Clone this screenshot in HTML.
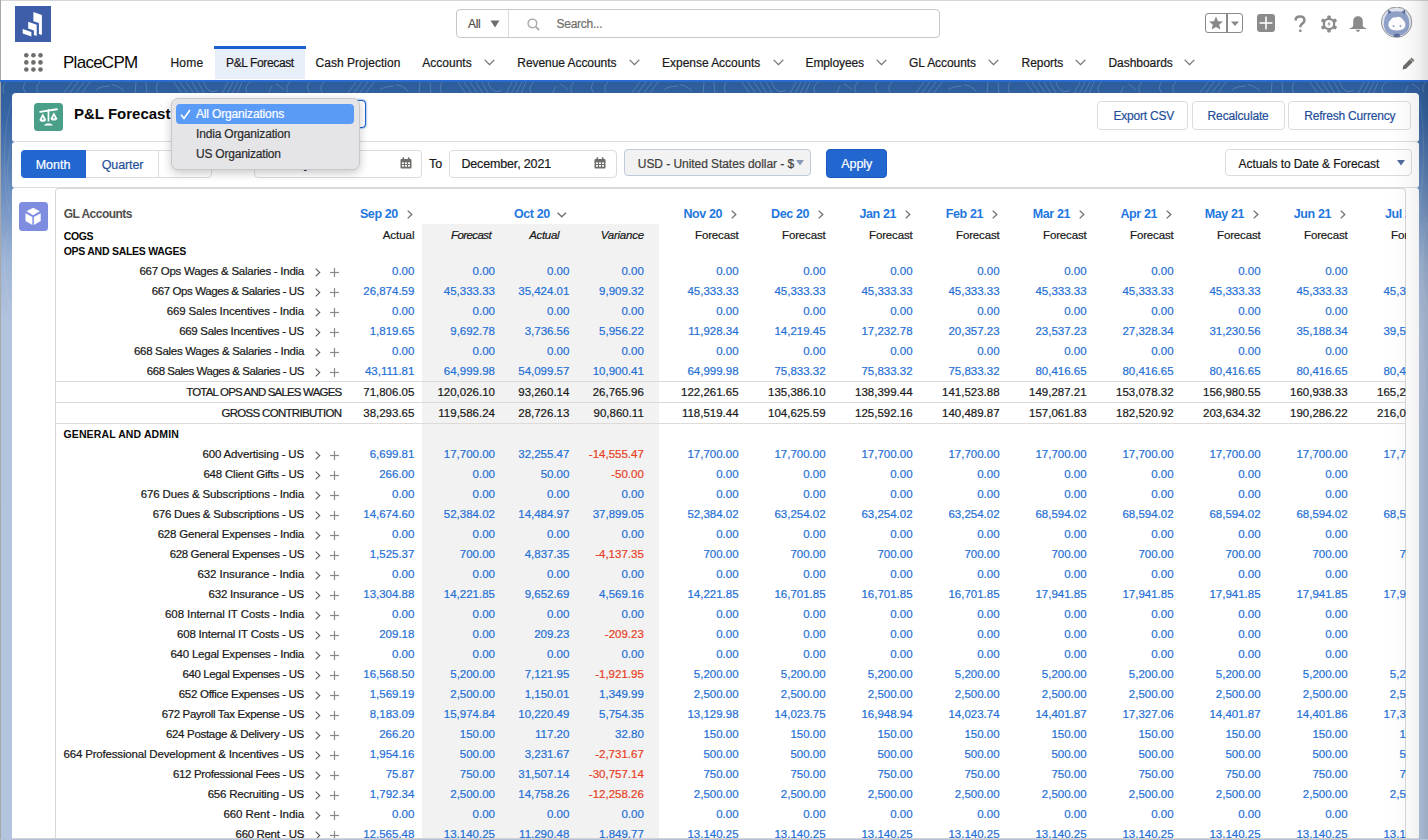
<!DOCTYPE html>
<html><head><meta charset="utf-8"><title>P&amp;L Forecast</title>
<style>
html,body{margin:0;padding:0;}
body{width:1428px;height:840px;position:relative;overflow:hidden;background:#fff;font-family:"Liberation Sans", sans-serif;}
.t{position:absolute;white-space:nowrap;}
.s{-webkit-text-stroke:0.2px currentColor;}
svg{display:block}
</style></head><body>
<div style="position:absolute;left:0;top:82px;width:1428px;height:758px;background:linear-gradient(180deg,#2d5c9b 0px,#3a68a6 40px,#6c8ec0 110px,#9fb5d6 180px,#b2c3de 240px,#b3c4de 758px)"></div>
<svg style="position:absolute;left:0;top:82px" width="1428" height="758" viewBox="0 0 1428 758">
<defs><pattern id="topo" x="0" y="0" width="284" height="12" patternUnits="userSpaceOnUse">
<g fill="none" stroke="#ffffff" stroke-opacity="0.22" stroke-width="0.8">
<path d="M6 0 C2 4, 2 8, 5 12"/><path d="M26 0 C22 4, 23 8, 27 12"/><path d="M40 0 C36 4, 36 8, 39 12"/>
<path d="M63 12 L72 0"/><path d="M69 12 L78 0"/><path d="M75 12 L84 0"/><path d="M81 12 L90 0"/>
<path d="M96 8 C100 5, 104 4, 110 4"/><path d="M112 3 C116 3, 120 5, 124 9"/>
<path d="M136 0 L135 12"/><path d="M146 0 L147 12"/><path d="M158 0 C156 4, 156 8, 158 12"/>
<path d="M174 0 L182 12"/><path d="M180 0 L188 12"/><path d="M186 0 L194 12"/><path d="M192 0 L199 12"/><path d="M198 0 L204 11"/><path d="M204 0 C206 8, 212 12, 218 8"/>
<path d="M222 12 L228 0"/><path d="M227 12 L233 0"/><path d="M232 12 L238 0"/><path d="M237 12 L242 0"/>
<path d="M250 0 C245 4, 245 8, 248 12"/><path d="M268 12 L272 4"/><path d="M276 2 C280 4, 282 6, 284 8"/>
</g></pattern></defs>
<rect x="0" y="0" width="1428" height="11" fill="url(#topo)"/>
<g fill="none" stroke="#ffffff" stroke-opacity="0.12" stroke-width="0.8">
<path d="M11 20 C3 50, 2 90, 9 130"/><path d="M8 150 C2 170, 4 200, 11 230"/><path d="M12 60 C6 80, 6 100, 12 120"/>
<path d="M1420 20 C1425 50, 1425 90, 1419 130"/><path d="M1428 140 C1420 170, 1420 200, 1428 230"/><path d="M1419 250 C1426 280, 1426 310, 1420 340"/>
</g></svg>
<div style="position:absolute;left:0px;top:0px;width:1428px;height:80px;background:#fff"></div>
<div style="position:absolute;left:0px;top:0px;width:1428px;height:1px;background:#d4d4da"></div>
<div style="position:absolute;left:0px;top:0px;width:1px;height:840px;background:#a8a8a8"></div>
<div style="position:absolute;left:0px;top:80px;width:1428px;height:2px;background:#2a6bd1"></div>
<svg style="position:absolute;left:15px;top:6px" width="36" height="36" viewBox="0 0 36 36">
<rect width="36" height="36" fill="#3f5ea9"/>
<polygon fill="#fff" points="18.4,5.9 26.9,8.9 26.9,28.9 23.9,27.9 23.9,16.9 18.4,15.2"/>
<polygon fill="#fff" points="13.2,15.7 21.7,18.7 21.7,29.9 18.9,28.9 18.9,24.4 13.2,22.4"/>
<polygon fill="#fff" points="7.7,22.9 16.4,25.9 16.4,30.4 7.7,27.4"/>
</svg>
<div style="position:absolute;left:456px;top:9px;width:484px;height:29px;border:1px solid #c9c7c5;border-radius:4px;background:#fff;box-sizing:border-box"></div>
<div style="position:absolute;left:508px;top:10px;width:1px;height:27px;background:#dddbda"></div>
<div class="t s" style="top:14px;font-size:12px;color:#514f4d;line-height:20px;letter-spacing:-0.3px;left:468px;">All</div>
<svg style="position:absolute;left:490px;top:20px" width="10" height="8" viewBox="0 0 10 8"><polygon points="0.5,0.5 9.5,0.5 5,7.5" fill="#706e6b"/></svg>
<svg style="position:absolute;left:527px;top:18px" width="13" height="13" viewBox="0 0 13 13"><circle cx="5.4" cy="5.4" r="4.3" fill="none" stroke="#a9a9a9" stroke-width="1.4"/><line x1="8.6" y1="8.6" x2="12.2" y2="12.2" stroke="#a9a9a9" stroke-width="1.7"/></svg>
<div class="t s" style="top:14px;font-size:12px;color:#706e6b;line-height:20px;letter-spacing:-0.25px;left:556.5px;">Search...</div>
<div style="position:absolute;left:1205px;top:13px;width:38px;height:20px;border:1px solid #8a8a8a;border-radius:3px;box-sizing:border-box;background:#fff"></div>
<div style="position:absolute;left:1226px;top:14px;width:1.5px;height:19px;background:#8a8a8a"></div>
<svg style="position:absolute;left:1208px;top:15px" width="16" height="16" viewBox="0 0 16 16"><polygon fill="#878787" points="8,1.5 10,6.3 15,6.5 11.2,9.7 12.4,14.6 8,11.9 3.6,14.6 4.8,9.7 1,6.5 6,6.3"/></svg>
<svg style="position:absolute;left:1230px;top:21px" width="10" height="6" viewBox="0 0 10 6"><polygon fill="#878787" points="1,0.5 9,0.5 5,5"/></svg>
<svg style="position:absolute;left:1257px;top:14px" width="18" height="18" viewBox="0 0 18 18"><rect width="18" height="18" rx="3" fill="#8b8b8b"/><rect x="2.6" y="8.2" width="12.8" height="1.6" fill="#fff"/><rect x="8.2" y="2.6" width="1.6" height="12.8" fill="#fff"/></svg>
<svg style="position:absolute;left:1293px;top:15px" width="14" height="18" viewBox="0 0 14 18"><path d="M2.6 5.4 C2.6 2.8 4.5 1.6 7 1.6 C9.6 1.6 11.4 3 11.4 5.2 C11.4 7.4 9.8 8.2 8.6 9.2 C7.7 10 7.3 10.6 7.3 12.2" fill="none" stroke="#8b8b8b" stroke-width="2.5"/><circle cx="7.3" cy="15.8" r="1.4" fill="#8b8b8b"/></svg>
<svg style="position:absolute;left:1320px;top:15px" width="18" height="18" viewBox="0 0 18 18"><g fill="#8b8b8b"><circle cx="9" cy="9" r="6.2"/><rect x="7.3" y="0.5" width="3.4" height="17" rx="1"/><rect x="7.3" y="0.5" width="3.4" height="17" rx="1" transform="rotate(60 9 9)"/><rect x="7.3" y="0.5" width="3.4" height="17" rx="1" transform="rotate(120 9 9)"/></g><circle cx="9" cy="9" r="4" fill="#fff"/><path d="M9.9 5.8 L7.4 9.4 L9.1 9.4 L8.1 12.2 L10.7 8.5 L9 8.5 Z" fill="#8b8b8b"/></svg>
<svg style="position:absolute;left:1349px;top:15px" width="18" height="18" viewBox="0 0 18 18"><path d="M9 1.2 C5.6 1.2 4.2 3.6 4.2 6.6 L4.2 10.4 C4.2 11.8 2.6 12.6 0.8 13.2 L0.8 14 L17.2 14 L17.2 13.2 C15.4 12.6 13.8 11.8 13.8 10.4 L13.8 6.6 C13.8 3.6 12.4 1.2 9 1.2 Z" fill="#8b8b8b"/><path d="M7 14.8 C7.2 16.2 8 16.8 9 16.8 C10 16.8 10.8 16.2 11 14.8 Z" fill="#8b8b8b"/></svg>
<svg style="position:absolute;left:1381px;top:7px" width="32" height="32" viewBox="0 0 32 32">
<defs><clipPath id="avc"><circle cx="15.6" cy="15.2" r="14.8"/></clipPath></defs>
<circle cx="15.6" cy="15.2" r="15.2" fill="#dfe4ee" stroke="#8c8c8c" stroke-width="0.9"/>
<g clip-path="url(#avc)">
<path d="M3 19 C2.6 13 4 8.5 6.6 6.2 L7 2.6 L10.4 4.8 C13.6 4 17.6 4 20.8 4.8 L24.2 2.6 L24.6 6.2 C27.2 8.5 28.6 13 28.2 19 C27.4 25.5 22.5 28.8 15.6 28.8 C8.7 28.8 3.8 25.5 3 19 Z" fill="#8fa1c8"/>
<path d="M7.2 3 L10.6 5 L7.4 7.2 Z" fill="#5a6b98"/><path d="M24 3 L20.6 5 L23.8 7.2 Z" fill="#5a6b98"/>
<path d="M7.4 18 C7.4 13.6 10.6 11.6 15.8 11.6 C21 11.6 24.4 13.6 24.4 18 C24.4 21.6 21 23.4 15.8 23.4 C10.6 23.4 7.4 21.6 7.4 18 Z" fill="#fff"/>
<path d="M9.4 13.8 C10.5 10.8 13 9.8 15 10.4 C17.6 9 20.8 10.4 22.2 13.2 C20 12.6 18.6 12.8 16.8 12 C15 13.2 12 13.2 9.4 13.8 Z" fill="#fff"/>
<ellipse cx="12.6" cy="19" rx="0.9" ry="1" fill="#8a9bc2"/><ellipse cx="19.4" cy="19" rx="0.9" ry="1" fill="#8a9bc2"/>
<path d="M12.4 30 C12.4 27.4 13.8 26.4 15.8 26.4 C17.8 26.4 19.2 27.4 19.2 30 Z" fill="#5a6b98"/>
</g></svg>
<svg style="position:absolute;left:24px;top:53px" width="19" height="19" viewBox="0 0 19 19"><circle cx="2.3" cy="2.3" r="2.3" fill="#706e6b"/><circle cx="2.3" cy="9.399999999999999" r="2.3" fill="#706e6b"/><circle cx="2.3" cy="16.5" r="2.3" fill="#706e6b"/><circle cx="9.399999999999999" cy="2.3" r="2.3" fill="#706e6b"/><circle cx="9.399999999999999" cy="9.399999999999999" r="2.3" fill="#706e6b"/><circle cx="9.399999999999999" cy="16.5" r="2.3" fill="#706e6b"/><circle cx="16.5" cy="2.3" r="2.3" fill="#706e6b"/><circle cx="16.5" cy="9.399999999999999" r="2.3" fill="#706e6b"/><circle cx="16.5" cy="16.5" r="2.3" fill="#706e6b"/></svg>
<div class="t" style="top:53px;font-size:17px;color:#080707;line-height:20px;letter-spacing:-0.73px;left:63px;">PlaceCPM</div>
<div style="position:absolute;left:214px;top:46px;width:92px;height:3px;background:#1b62d0"></div>
<div style="position:absolute;left:215px;top:49px;width:90px;height:30px;background:#e9eff9"></div>
<div class="t s" style="top:53px;font-size:12px;color:#181818;line-height:20px;letter-spacing:0.2px;left:170.5px;">Home</div>
<div class="t s" style="top:53px;font-size:12px;color:#181818;line-height:20px;letter-spacing:-0.37px;left:226px;">P&amp;L Forecast</div>
<div class="t s" style="top:53px;font-size:12px;color:#181818;line-height:20px;left:315.6px;">Cash Projection</div>
<div class="t s" style="top:53px;font-size:12px;color:#181818;line-height:20px;left:422.3px;">Accounts</div>
<svg style="position:absolute;left:484px;top:59px" width="11" height="7" viewBox="0 0 11 7"><polyline points="0.7,0.8 5.5,5.6 10.3,0.8" fill="none" stroke="#706e6b" stroke-width="1.2"/></svg>
<div class="t s" style="top:53px;font-size:12px;color:#181818;line-height:20px;letter-spacing:-0.06px;left:517.3px;">Revenue Accounts</div>
<svg style="position:absolute;left:629px;top:59px" width="11" height="7" viewBox="0 0 11 7"><polyline points="0.7,0.8 5.5,5.6 10.3,0.8" fill="none" stroke="#706e6b" stroke-width="1.2"/></svg>
<div class="t s" style="top:53px;font-size:12px;color:#181818;line-height:20px;letter-spacing:-0.04px;left:662.1px;">Expense Accounts</div>
<svg style="position:absolute;left:772.8px;top:59px" width="11" height="7" viewBox="0 0 11 7"><polyline points="0.7,0.8 5.5,5.6 10.3,0.8" fill="none" stroke="#706e6b" stroke-width="1.2"/></svg>
<div class="t s" style="top:53px;font-size:12px;color:#181818;line-height:20px;letter-spacing:-0.1px;left:805.5px;">Employees</div>
<svg style="position:absolute;left:876px;top:59px" width="11" height="7" viewBox="0 0 11 7"><polyline points="0.7,0.8 5.5,5.6 10.3,0.8" fill="none" stroke="#706e6b" stroke-width="1.2"/></svg>
<div class="t s" style="top:53px;font-size:12px;color:#181818;line-height:20px;letter-spacing:-0.06px;left:909.1px;">GL Accounts</div>
<svg style="position:absolute;left:987.8px;top:59px" width="11" height="7" viewBox="0 0 11 7"><polyline points="0.7,0.8 5.5,5.6 10.3,0.8" fill="none" stroke="#706e6b" stroke-width="1.2"/></svg>
<div class="t s" style="top:53px;font-size:12px;color:#181818;line-height:20px;letter-spacing:-0.05px;left:1021.6px;">Reports</div>
<svg style="position:absolute;left:1075px;top:59px" width="11" height="7" viewBox="0 0 11 7"><polyline points="0.7,0.8 5.5,5.6 10.3,0.8" fill="none" stroke="#706e6b" stroke-width="1.2"/></svg>
<div class="t s" style="top:53px;font-size:12px;color:#181818;line-height:20px;letter-spacing:-0.05px;left:1108.5px;">Dashboards</div>
<svg style="position:absolute;left:1184px;top:59px" width="11" height="7" viewBox="0 0 11 7"><polyline points="0.7,0.8 5.5,5.6 10.3,0.8" fill="none" stroke="#706e6b" stroke-width="1.2"/></svg>
<svg style="position:absolute;left:1402px;top:57px" width="13" height="13" viewBox="0 0 13 13"><path d="M9.6 0.6 L12.4 3.4 L4 11.8 L0.6 12.4 L1.2 9 Z" fill="#706e6b"/><path d="M8.2 2 L11 4.8" stroke="#fff" stroke-width="0.8"/></svg>
<div style="position:absolute;left:12px;top:93px;width:1407px;height:49px;background:#fff;border-radius:4px 4px 3px 3px;border-bottom:1px solid #dcdcdc;box-sizing:border-box"></div>
<div style="position:absolute;left:12px;top:142px;width:1407px;height:46px;background:#fff;border-radius:3px;border-bottom:1px solid #dcdcdc;box-sizing:border-box"></div>
<div style="position:absolute;left:12px;top:188px;width:1407px;height:652px;background:#fff;border-radius:3px 3px 0 0"></div>
<svg style="position:absolute;left:34px;top:103px" width="29" height="28" viewBox="0 0 29 28">
<rect width="29" height="28" rx="3.5" fill="#4a9f89"/>
<path d="M6.2 8.9 L22.9 6.3" stroke="#fff" stroke-width="1.9" stroke-linecap="round"/>
<rect x="13.6" y="6.2" width="1.7" height="12.2" fill="#fff"/>
<path d="M8.8 10.6 L5.6 16.4 C5.6 18.2 7 18.8 8.8 18.8 C10.6 18.8 12 18.2 12 16.4 Z" fill="#fff"/>
<path d="M19.9 9.2 L16.7 15.2 C16.7 17 18.1 17.6 19.9 17.6 C21.7 17.6 23.1 17 23.1 15.2 Z" fill="#fff"/>
<path d="M8.8 14.2 L7.6 16.6 L10 16.6 Z" fill="#4a9f89"/><path d="M19.9 12.9 L18.7 15.3 L21.1 15.3 Z" fill="#4a9f89"/>
<path d="M9.9 22.6 C10.4 21 12 20.4 14.4 20.4 C16.8 20.4 18.4 21 19 22.6 Z" fill="#fff"/>
</svg>
<div class="t" style="top:104px;font-size:15px;color:#080707;line-height:20px;font-weight:bold;left:74px;">P&amp;L Forecast</div>
<div style="position:absolute;left:300px;top:100px;width:66px;height:28px;border:1px solid #1b62d0;border-radius:4px;box-sizing:border-box;background:#fff;box-shadow:0 0 2px #1b62d0"></div>
<div style="position:absolute;left:1097px;top:101px;width:91px;height:29px;border:1px solid #dddbda;border-radius:4px;box-sizing:border-box;background:#fff"></div>
<div class="t s" style="top:106px;font-size:12px;color:#1f4f9a;line-height:20px;letter-spacing:-0.2px;left:1113.4px;">Export CSV</div>
<div style="position:absolute;left:1192px;top:101px;width:93px;height:29px;border:1px solid #dddbda;border-radius:4px;box-sizing:border-box;background:#fff"></div>
<div class="t s" style="top:106px;font-size:12px;color:#1f4f9a;line-height:20px;letter-spacing:-0.15px;left:1207.6px;">Recalculate</div>
<div style="position:absolute;left:1288px;top:101px;width:123px;height:29px;border:1px solid #dddbda;border-radius:4px;box-sizing:border-box;background:#fff"></div>
<div class="t s" style="top:106px;font-size:12px;color:#1f4f9a;line-height:20px;letter-spacing:-0.18px;left:1304.2px;">Refresh Currency</div>
<div style="position:absolute;left:21px;top:150px;width:191px;height:28px;border:1px solid #dddbda;border-radius:4px;box-sizing:border-box;background:#fff"></div>
<div style="position:absolute;left:21px;top:150px;width:65px;height:28px;background:#2266cf;border-radius:4px 0 0 4px"></div>
<div style="position:absolute;left:158px;top:151px;width:1px;height:26px;background:#dddbda"></div>
<div class="t s" style="top:155px;font-size:12.5px;color:#fff;line-height:20px;left:35.7px;">Month</div>
<div class="t s" style="top:155px;font-size:12.5px;color:#1f4f9a;line-height:20px;letter-spacing:-0.1px;left:101.7px;">Quarter</div>
<div style="position:absolute;left:254px;top:150px;width:168px;height:28px;border:1px solid #dddbda;border-radius:4px;box-sizing:border-box;background:#fff"></div>
<div class="t s" style="top:154px;font-size:12.5px;color:#181818;line-height:20px;letter-spacing:-0.15px;left:266.4px;">January, 2020</div>
<div class="t s" style="top:154px;font-size:12.5px;color:#181818;line-height:20px;letter-spacing:-0.1px;left:429px;">To</div>
<div style="position:absolute;left:449px;top:150px;width:168px;height:28px;border:1px solid #dddbda;border-radius:4px;box-sizing:border-box;background:#fff"></div>
<div class="t s" style="top:154px;font-size:12.5px;color:#181818;line-height:20px;letter-spacing:-0.15px;left:461.4px;">December, 2021</div>
<svg style="position:absolute;left:400px;top:157px" width="12" height="12" viewBox="0 0 12 12"><rect x="0.5" y="2" width="11" height="9.5" rx="1" fill="#706e6b"/><rect x="2.5" y="0.3" width="1.6" height="2.6" fill="#706e6b"/><rect x="7.9" y="0.3" width="1.6" height="2.6" fill="#706e6b"/><g fill="#fff"><rect x="2" y="5.4" width="2" height="1.6"/><rect x="5" y="5.4" width="2" height="1.6"/><rect x="8" y="5.4" width="2" height="1.6"/><rect x="2" y="8" width="2" height="1.6"/><rect x="5" y="8" width="2" height="1.6"/><rect x="8" y="8" width="2" height="1.6"/></g></svg>
<svg style="position:absolute;left:594px;top:157px" width="12" height="12" viewBox="0 0 12 12"><rect x="0.5" y="2" width="11" height="9.5" rx="1" fill="#706e6b"/><rect x="2.5" y="0.3" width="1.6" height="2.6" fill="#706e6b"/><rect x="7.9" y="0.3" width="1.6" height="2.6" fill="#706e6b"/><g fill="#fff"><rect x="2" y="5.4" width="2" height="1.6"/><rect x="5" y="5.4" width="2" height="1.6"/><rect x="8" y="5.4" width="2" height="1.6"/><rect x="2" y="8" width="2" height="1.6"/><rect x="5" y="8" width="2" height="1.6"/><rect x="8" y="8" width="2" height="1.6"/></g></svg>
<div style="position:absolute;left:624px;top:149px;width:187px;height:27px;border:1px solid #bfc9da;border-radius:4px;box-sizing:border-box;background:#f3f2f2"></div>
<div class="t s" style="top:154px;font-size:12px;color:#3e3e3c;line-height:20px;letter-spacing:-0.06px;left:637.8px;">USD - United States dollar - $</div>
<svg style="position:absolute;left:796px;top:160px" width="8" height="6" viewBox="0 0 8 6"><polygon points="0,0 8,0 4,5.5" fill="#8799b6"/></svg>
<div style="position:absolute;left:826px;top:149px;width:61px;height:29px;background:#2266cf;border-radius:4px;border:1px solid #1b5bbf;box-sizing:border-box"></div>
<div class="t s" style="top:154px;font-size:12.5px;color:#fff;line-height:20px;letter-spacing:-0.1px;left:841.3px;">Apply</div>
<div style="position:absolute;left:1225px;top:149px;width:187px;height:27px;border:1px solid #dddbda;border-radius:4px;box-sizing:border-box;background:#fff"></div>
<div class="t s" style="top:154px;font-size:12px;color:#181818;line-height:20px;letter-spacing:-0.08px;left:1238.6px;">Actuals to Date &amp; Forecast</div>
<svg style="position:absolute;left:1397px;top:160px" width="8" height="6" viewBox="0 0 8 6"><polygon points="0,0 8,0 4,5.5" fill="#4f6a9c"/></svg>
<div style="position:absolute;left:55px;top:188px;width:1351px;height:652px;border:1px solid #d8d8d8;border-bottom:none;border-radius:4px 4px 0 0;box-sizing:border-box;background:#fff"></div>
<svg style="position:absolute;left:19px;top:202px" width="29" height="29" viewBox="0 0 29 29">
<rect width="29" height="29" rx="3.5" fill="#7f8de1"/>
<polygon points="14.2,5.7 20.8,9.3 14.2,13.2 7.5,9.3" fill="#fff"/>
<polygon points="6.5,11.2 13.4,15.1 13.4,23.1 6.5,19" fill="#fff"/>
<polygon points="21.7,11.2 14.9,15.1 14.9,23.1 21.7,19" fill="#fff"/>
</svg>
<div style="position:absolute;left:0;top:0;width:1428px;height:840px;clip-path:inset(0 22px 2px 0)">
<div style="position:absolute;left:422px;top:224px;width:237px;height:616px;background:#f2f2f2"></div>
<div class="t" style="top:204px;font-size:12px;color:#514f4d;line-height:20px;font-weight:bold;letter-spacing:-0.52px;left:63.7px;">GL Accounts</div>
<div class="t" style="top:204px;font-size:12.5px;color:#1f78e0;line-height:20px;font-weight:bold;letter-spacing:-0.4px;right:1030.2px;">Sep 20</div>
<svg style="position:absolute;left:406.8px;top:210px" width="6" height="9" viewBox="0 0 6 9"><polyline points="0.7,0.6 4.8,4.5 0.7,8.4" fill="none" stroke="#706e6b" stroke-width="1.3"/></svg>
<div class="t" style="top:204px;font-size:12.5px;color:#1f78e0;line-height:20px;font-weight:bold;letter-spacing:-0.4px;left:514px;">Oct 20</div>
<svg style="position:absolute;left:557px;top:212px" width="10" height="6" viewBox="0 0 10 6"><polyline points="0.6,0.7 4.8,4.8 9,0.7" fill="none" stroke="#706e6b" stroke-width="1.3"/></svg>
<div class="t" style="top:204px;font-size:12.5px;color:#1f78e0;line-height:20px;font-weight:bold;letter-spacing:-0.4px;right:706.0px;">Nov 20</div>
<svg style="position:absolute;left:731.0px;top:210px" width="6" height="9" viewBox="0 0 6 9"><polyline points="0.7,0.6 4.8,4.5 0.7,8.4" fill="none" stroke="#706e6b" stroke-width="1.3"/></svg>
<div class="t" style="top:204px;font-size:12.5px;color:#1f78e0;line-height:20px;font-weight:bold;letter-spacing:-0.4px;right:619.0px;">Dec 20</div>
<svg style="position:absolute;left:818.0px;top:210px" width="6" height="9" viewBox="0 0 6 9"><polyline points="0.7,0.6 4.8,4.5 0.7,8.4" fill="none" stroke="#706e6b" stroke-width="1.3"/></svg>
<div class="t" style="top:204px;font-size:12.5px;color:#1f78e0;line-height:20px;font-weight:bold;letter-spacing:-0.4px;right:532.0px;">Jan 21</div>
<svg style="position:absolute;left:905.0px;top:210px" width="6" height="9" viewBox="0 0 6 9"><polyline points="0.7,0.6 4.8,4.5 0.7,8.4" fill="none" stroke="#706e6b" stroke-width="1.3"/></svg>
<div class="t" style="top:204px;font-size:12.5px;color:#1f78e0;line-height:20px;font-weight:bold;letter-spacing:-0.4px;right:445.0px;">Feb 21</div>
<svg style="position:absolute;left:992.0px;top:210px" width="6" height="9" viewBox="0 0 6 9"><polyline points="0.7,0.6 4.8,4.5 0.7,8.4" fill="none" stroke="#706e6b" stroke-width="1.3"/></svg>
<div class="t" style="top:204px;font-size:12.5px;color:#1f78e0;line-height:20px;font-weight:bold;letter-spacing:-0.4px;right:358.0px;">Mar 21</div>
<svg style="position:absolute;left:1079.0px;top:210px" width="6" height="9" viewBox="0 0 6 9"><polyline points="0.7,0.6 4.8,4.5 0.7,8.4" fill="none" stroke="#706e6b" stroke-width="1.3"/></svg>
<div class="t" style="top:204px;font-size:12.5px;color:#1f78e0;line-height:20px;font-weight:bold;letter-spacing:-0.4px;right:271.0px;">Apr 21</div>
<svg style="position:absolute;left:1166.0px;top:210px" width="6" height="9" viewBox="0 0 6 9"><polyline points="0.7,0.6 4.8,4.5 0.7,8.4" fill="none" stroke="#706e6b" stroke-width="1.3"/></svg>
<div class="t" style="top:204px;font-size:12.5px;color:#1f78e0;line-height:20px;font-weight:bold;letter-spacing:-0.4px;right:184.0px;">May 21</div>
<svg style="position:absolute;left:1253.0px;top:210px" width="6" height="9" viewBox="0 0 6 9"><polyline points="0.7,0.6 4.8,4.5 0.7,8.4" fill="none" stroke="#706e6b" stroke-width="1.3"/></svg>
<div class="t" style="top:204px;font-size:12.5px;color:#1f78e0;line-height:20px;font-weight:bold;letter-spacing:-0.4px;right:97.0px;">Jun 21</div>
<svg style="position:absolute;left:1340.0px;top:210px" width="6" height="9" viewBox="0 0 6 9"><polyline points="0.7,0.6 4.8,4.5 0.7,8.4" fill="none" stroke="#706e6b" stroke-width="1.3"/></svg>
<div class="t" style="top:204px;font-size:12.5px;color:#1f78e0;line-height:20px;font-weight:bold;letter-spacing:-0.4px;right:10.0px;">Jul 21</div>
<svg style="position:absolute;left:1427.0px;top:210px" width="6" height="9" viewBox="0 0 6 9"><polyline points="0.7,0.6 4.8,4.5 0.7,8.4" fill="none" stroke="#706e6b" stroke-width="1.3"/></svg>
<div class="t s" style="top:225px;font-size:11.5px;color:#181818;line-height:20px;letter-spacing:-0.05px;right:1013.6px;">Actual</div>
<div class="t s" style="top:225px;font-size:11.5px;color:#181818;line-height:20px;font-style:italic;letter-spacing:-0.6px;right:937px;">Forecast</div>
<div class="t s" style="top:225px;font-size:11.5px;color:#181818;line-height:20px;font-style:italic;letter-spacing:-0.3px;right:868.7px;">Actual</div>
<div class="t s" style="top:225px;font-size:11.5px;color:#181818;line-height:20px;font-style:italic;letter-spacing:-0.25px;right:784.2px;">Variance</div>
<div class="t s" style="top:225px;font-size:11.5px;color:#181818;line-height:20px;letter-spacing:-0.15px;right:689.4px;">Forecast</div>
<div class="t s" style="top:225px;font-size:11.5px;color:#181818;line-height:20px;letter-spacing:-0.15px;right:602.4px;">Forecast</div>
<div class="t s" style="top:225px;font-size:11.5px;color:#181818;line-height:20px;letter-spacing:-0.15px;right:515.4px;">Forecast</div>
<div class="t s" style="top:225px;font-size:11.5px;color:#181818;line-height:20px;letter-spacing:-0.15px;right:428.4px;">Forecast</div>
<div class="t s" style="top:225px;font-size:11.5px;color:#181818;line-height:20px;letter-spacing:-0.15px;right:341.4000000000001px;">Forecast</div>
<div class="t s" style="top:225px;font-size:11.5px;color:#181818;line-height:20px;letter-spacing:-0.15px;right:254.4000000000001px;">Forecast</div>
<div class="t s" style="top:225px;font-size:11.5px;color:#181818;line-height:20px;letter-spacing:-0.15px;right:167.4000000000001px;">Forecast</div>
<div class="t s" style="top:225px;font-size:11.5px;color:#181818;line-height:20px;letter-spacing:-0.15px;right:80.40000000000009px;">Forecast</div>
<div class="t s" style="top:225px;font-size:11.5px;color:#181818;line-height:20px;letter-spacing:-0.15px;right:-6.599999999999909px;">Forecast</div>
<div class="t" style="top:226px;font-size:10.5px;color:#080707;line-height:20px;font-weight:bold;letter-spacing:-0.35px;left:63.7px;">COGS</div>
<div class="t" style="top:241px;font-size:10.5px;color:#080707;line-height:20px;font-weight:bold;letter-spacing:-0.27px;left:63.7px;">OPS AND SALES WAGES</div>
<div class="t s" style="top:261px;font-size:11.5px;color:#181818;line-height:20px;letter-spacing:-0.257px;right:1124px;">667 Ops Wages &amp; Salaries - India</div>
<svg style="position:absolute;left:315px;top:268px" width="6" height="9" viewBox="0 0 6 9"><polyline points="0.7,0.6 4.7,4.5 0.7,8.4" fill="none" stroke="#5e5e5e" stroke-width="1.15"/></svg>
<svg style="position:absolute;left:329.5px;top:268px" width="9" height="9" viewBox="0 0 9 9"><rect x="0" y="3.9" width="9" height="1.2" fill="#8a8a8a"/><rect x="3.9" y="0" width="1.2" height="9" fill="#8a8a8a"/></svg>
<div class="t s" style="top:261px;font-size:11.5px;color:#1f6fd6;line-height:20px;right:1013.6px;">0.00</div>
<div class="t s" style="top:261px;font-size:11.5px;color:#1f6fd6;line-height:20px;right:933px;">0.00</div>
<div class="t s" style="top:261px;font-size:11.5px;color:#1f6fd6;line-height:20px;right:858.6px;">0.00</div>
<div class="t s" style="top:261px;font-size:11.5px;color:#1f6fd6;line-height:20px;right:784.2px;">0.00</div>
<div class="t s" style="top:261px;font-size:11.5px;color:#1f6fd6;line-height:20px;right:689.4px;">0.00</div>
<div class="t s" style="top:261px;font-size:11.5px;color:#1f6fd6;line-height:20px;right:602.4px;">0.00</div>
<div class="t s" style="top:261px;font-size:11.5px;color:#1f6fd6;line-height:20px;right:515.4px;">0.00</div>
<div class="t s" style="top:261px;font-size:11.5px;color:#1f6fd6;line-height:20px;right:428.4px;">0.00</div>
<div class="t s" style="top:261px;font-size:11.5px;color:#1f6fd6;line-height:20px;right:341.4000000000001px;">0.00</div>
<div class="t s" style="top:261px;font-size:11.5px;color:#1f6fd6;line-height:20px;right:254.4000000000001px;">0.00</div>
<div class="t s" style="top:261px;font-size:11.5px;color:#1f6fd6;line-height:20px;right:167.4000000000001px;">0.00</div>
<div class="t s" style="top:261px;font-size:11.5px;color:#1f6fd6;line-height:20px;right:80.40000000000009px;">0.00</div>
<div class="t s" style="top:261px;font-size:11.5px;color:#1f6fd6;line-height:20px;right:-6.599999999999909px;">0.00</div>
<div class="t s" style="top:281px;font-size:11.5px;color:#181818;line-height:20px;letter-spacing:-0.396px;right:1124px;">667 Ops Wages &amp; Salaries - US</div>
<svg style="position:absolute;left:315px;top:288px" width="6" height="9" viewBox="0 0 6 9"><polyline points="0.7,0.6 4.7,4.5 0.7,8.4" fill="none" stroke="#5e5e5e" stroke-width="1.15"/></svg>
<svg style="position:absolute;left:329.5px;top:288px" width="9" height="9" viewBox="0 0 9 9"><rect x="0" y="3.9" width="9" height="1.2" fill="#8a8a8a"/><rect x="3.9" y="0" width="1.2" height="9" fill="#8a8a8a"/></svg>
<div class="t s" style="top:281px;font-size:11.5px;color:#1f6fd6;line-height:20px;right:1013.6px;">26,874.59</div>
<div class="t s" style="top:281px;font-size:11.5px;color:#1f6fd6;line-height:20px;right:933px;">45,333.33</div>
<div class="t s" style="top:281px;font-size:11.5px;color:#1f6fd6;line-height:20px;right:858.6px;">35,424.01</div>
<div class="t s" style="top:281px;font-size:11.5px;color:#1f6fd6;line-height:20px;right:784.2px;">9,909.32</div>
<div class="t s" style="top:281px;font-size:11.5px;color:#1f6fd6;line-height:20px;right:689.4px;">45,333.33</div>
<div class="t s" style="top:281px;font-size:11.5px;color:#1f6fd6;line-height:20px;right:602.4px;">45,333.33</div>
<div class="t s" style="top:281px;font-size:11.5px;color:#1f6fd6;line-height:20px;right:515.4px;">45,333.33</div>
<div class="t s" style="top:281px;font-size:11.5px;color:#1f6fd6;line-height:20px;right:428.4px;">45,333.33</div>
<div class="t s" style="top:281px;font-size:11.5px;color:#1f6fd6;line-height:20px;right:341.4000000000001px;">45,333.33</div>
<div class="t s" style="top:281px;font-size:11.5px;color:#1f6fd6;line-height:20px;right:254.4000000000001px;">45,333.33</div>
<div class="t s" style="top:281px;font-size:11.5px;color:#1f6fd6;line-height:20px;right:167.4000000000001px;">45,333.33</div>
<div class="t s" style="top:281px;font-size:11.5px;color:#1f6fd6;line-height:20px;right:80.40000000000009px;">45,333.33</div>
<div class="t s" style="top:281px;font-size:11.5px;color:#1f6fd6;line-height:20px;right:-6.599999999999909px;">45,333.33</div>
<div class="t s" style="top:301px;font-size:11.5px;color:#181818;line-height:20px;letter-spacing:-0.141px;right:1124px;">669 Sales Incentives - India</div>
<svg style="position:absolute;left:315px;top:308px" width="6" height="9" viewBox="0 0 6 9"><polyline points="0.7,0.6 4.7,4.5 0.7,8.4" fill="none" stroke="#5e5e5e" stroke-width="1.15"/></svg>
<svg style="position:absolute;left:329.5px;top:308px" width="9" height="9" viewBox="0 0 9 9"><rect x="0" y="3.9" width="9" height="1.2" fill="#8a8a8a"/><rect x="3.9" y="0" width="1.2" height="9" fill="#8a8a8a"/></svg>
<div class="t s" style="top:301px;font-size:11.5px;color:#1f6fd6;line-height:20px;right:1013.6px;">0.00</div>
<div class="t s" style="top:301px;font-size:11.5px;color:#1f6fd6;line-height:20px;right:933px;">0.00</div>
<div class="t s" style="top:301px;font-size:11.5px;color:#1f6fd6;line-height:20px;right:858.6px;">0.00</div>
<div class="t s" style="top:301px;font-size:11.5px;color:#1f6fd6;line-height:20px;right:784.2px;">0.00</div>
<div class="t s" style="top:301px;font-size:11.5px;color:#1f6fd6;line-height:20px;right:689.4px;">0.00</div>
<div class="t s" style="top:301px;font-size:11.5px;color:#1f6fd6;line-height:20px;right:602.4px;">0.00</div>
<div class="t s" style="top:301px;font-size:11.5px;color:#1f6fd6;line-height:20px;right:515.4px;">0.00</div>
<div class="t s" style="top:301px;font-size:11.5px;color:#1f6fd6;line-height:20px;right:428.4px;">0.00</div>
<div class="t s" style="top:301px;font-size:11.5px;color:#1f6fd6;line-height:20px;right:341.4000000000001px;">0.00</div>
<div class="t s" style="top:301px;font-size:11.5px;color:#1f6fd6;line-height:20px;right:254.4000000000001px;">0.00</div>
<div class="t s" style="top:301px;font-size:11.5px;color:#1f6fd6;line-height:20px;right:167.4000000000001px;">0.00</div>
<div class="t s" style="top:301px;font-size:11.5px;color:#1f6fd6;line-height:20px;right:80.40000000000009px;">0.00</div>
<div class="t s" style="top:301px;font-size:11.5px;color:#1f6fd6;line-height:20px;right:-6.599999999999909px;">0.00</div>
<div class="t s" style="top:321px;font-size:11.5px;color:#181818;line-height:20px;letter-spacing:-0.298px;right:1124px;">669 Sales Incentives - US</div>
<svg style="position:absolute;left:315px;top:328px" width="6" height="9" viewBox="0 0 6 9"><polyline points="0.7,0.6 4.7,4.5 0.7,8.4" fill="none" stroke="#5e5e5e" stroke-width="1.15"/></svg>
<svg style="position:absolute;left:329.5px;top:328px" width="9" height="9" viewBox="0 0 9 9"><rect x="0" y="3.9" width="9" height="1.2" fill="#8a8a8a"/><rect x="3.9" y="0" width="1.2" height="9" fill="#8a8a8a"/></svg>
<div class="t s" style="top:321px;font-size:11.5px;color:#1f6fd6;line-height:20px;right:1013.6px;">1,819.65</div>
<div class="t s" style="top:321px;font-size:11.5px;color:#1f6fd6;line-height:20px;right:933px;">9,692.78</div>
<div class="t s" style="top:321px;font-size:11.5px;color:#1f6fd6;line-height:20px;right:858.6px;">3,736.56</div>
<div class="t s" style="top:321px;font-size:11.5px;color:#1f6fd6;line-height:20px;right:784.2px;">5,956.22</div>
<div class="t s" style="top:321px;font-size:11.5px;color:#1f6fd6;line-height:20px;right:689.4px;">11,928.34</div>
<div class="t s" style="top:321px;font-size:11.5px;color:#1f6fd6;line-height:20px;right:602.4px;">14,219.45</div>
<div class="t s" style="top:321px;font-size:11.5px;color:#1f6fd6;line-height:20px;right:515.4px;">17,232.78</div>
<div class="t s" style="top:321px;font-size:11.5px;color:#1f6fd6;line-height:20px;right:428.4px;">20,357.23</div>
<div class="t s" style="top:321px;font-size:11.5px;color:#1f6fd6;line-height:20px;right:341.4000000000001px;">23,537.23</div>
<div class="t s" style="top:321px;font-size:11.5px;color:#1f6fd6;line-height:20px;right:254.4000000000001px;">27,328.34</div>
<div class="t s" style="top:321px;font-size:11.5px;color:#1f6fd6;line-height:20px;right:167.4000000000001px;">31,230.56</div>
<div class="t s" style="top:321px;font-size:11.5px;color:#1f6fd6;line-height:20px;right:80.40000000000009px;">35,188.34</div>
<div class="t s" style="top:321px;font-size:11.5px;color:#1f6fd6;line-height:20px;right:-6.599999999999909px;">39,594.12</div>
<div class="t s" style="top:341px;font-size:11.5px;color:#181818;line-height:20px;letter-spacing:-0.307px;right:1124px;">668 Sales Wages &amp; Salaries - India</div>
<svg style="position:absolute;left:315px;top:348px" width="6" height="9" viewBox="0 0 6 9"><polyline points="0.7,0.6 4.7,4.5 0.7,8.4" fill="none" stroke="#5e5e5e" stroke-width="1.15"/></svg>
<svg style="position:absolute;left:329.5px;top:348px" width="9" height="9" viewBox="0 0 9 9"><rect x="0" y="3.9" width="9" height="1.2" fill="#8a8a8a"/><rect x="3.9" y="0" width="1.2" height="9" fill="#8a8a8a"/></svg>
<div class="t s" style="top:341px;font-size:11.5px;color:#1f6fd6;line-height:20px;right:1013.6px;">0.00</div>
<div class="t s" style="top:341px;font-size:11.5px;color:#1f6fd6;line-height:20px;right:933px;">0.00</div>
<div class="t s" style="top:341px;font-size:11.5px;color:#1f6fd6;line-height:20px;right:858.6px;">0.00</div>
<div class="t s" style="top:341px;font-size:11.5px;color:#1f6fd6;line-height:20px;right:784.2px;">0.00</div>
<div class="t s" style="top:341px;font-size:11.5px;color:#1f6fd6;line-height:20px;right:689.4px;">0.00</div>
<div class="t s" style="top:341px;font-size:11.5px;color:#1f6fd6;line-height:20px;right:602.4px;">0.00</div>
<div class="t s" style="top:341px;font-size:11.5px;color:#1f6fd6;line-height:20px;right:515.4px;">0.00</div>
<div class="t s" style="top:341px;font-size:11.5px;color:#1f6fd6;line-height:20px;right:428.4px;">0.00</div>
<div class="t s" style="top:341px;font-size:11.5px;color:#1f6fd6;line-height:20px;right:341.4000000000001px;">0.00</div>
<div class="t s" style="top:341px;font-size:11.5px;color:#1f6fd6;line-height:20px;right:254.4000000000001px;">0.00</div>
<div class="t s" style="top:341px;font-size:11.5px;color:#1f6fd6;line-height:20px;right:167.4000000000001px;">0.00</div>
<div class="t s" style="top:341px;font-size:11.5px;color:#1f6fd6;line-height:20px;right:80.40000000000009px;">0.00</div>
<div class="t s" style="top:341px;font-size:11.5px;color:#1f6fd6;line-height:20px;right:-6.599999999999909px;">0.00</div>
<div class="t s" style="top:361px;font-size:11.5px;color:#181818;line-height:20px;letter-spacing:-0.462px;right:1124px;">668 Sales Wages &amp; Salaries - US</div>
<svg style="position:absolute;left:315px;top:368px" width="6" height="9" viewBox="0 0 6 9"><polyline points="0.7,0.6 4.7,4.5 0.7,8.4" fill="none" stroke="#5e5e5e" stroke-width="1.15"/></svg>
<svg style="position:absolute;left:329.5px;top:368px" width="9" height="9" viewBox="0 0 9 9"><rect x="0" y="3.9" width="9" height="1.2" fill="#8a8a8a"/><rect x="3.9" y="0" width="1.2" height="9" fill="#8a8a8a"/></svg>
<div class="t s" style="top:361px;font-size:11.5px;color:#1f6fd6;line-height:20px;right:1013.6px;">43,111.81</div>
<div class="t s" style="top:361px;font-size:11.5px;color:#1f6fd6;line-height:20px;right:933px;">64,999.98</div>
<div class="t s" style="top:361px;font-size:11.5px;color:#1f6fd6;line-height:20px;right:858.6px;">54,099.57</div>
<div class="t s" style="top:361px;font-size:11.5px;color:#1f6fd6;line-height:20px;right:784.2px;">10,900.41</div>
<div class="t s" style="top:361px;font-size:11.5px;color:#1f6fd6;line-height:20px;right:689.4px;">64,999.98</div>
<div class="t s" style="top:361px;font-size:11.5px;color:#1f6fd6;line-height:20px;right:602.4px;">75,833.32</div>
<div class="t s" style="top:361px;font-size:11.5px;color:#1f6fd6;line-height:20px;right:515.4px;">75,833.32</div>
<div class="t s" style="top:361px;font-size:11.5px;color:#1f6fd6;line-height:20px;right:428.4px;">75,833.32</div>
<div class="t s" style="top:361px;font-size:11.5px;color:#1f6fd6;line-height:20px;right:341.4000000000001px;">80,416.65</div>
<div class="t s" style="top:361px;font-size:11.5px;color:#1f6fd6;line-height:20px;right:254.4000000000001px;">80,416.65</div>
<div class="t s" style="top:361px;font-size:11.5px;color:#1f6fd6;line-height:20px;right:167.4000000000001px;">80,416.65</div>
<div class="t s" style="top:361px;font-size:11.5px;color:#1f6fd6;line-height:20px;right:80.40000000000009px;">80,416.65</div>
<div class="t s" style="top:361px;font-size:11.5px;color:#1f6fd6;line-height:20px;right:-6.599999999999909px;">80,416.65</div>
<div class="t s" style="top:382px;font-size:11.5px;color:#181818;line-height:20px;letter-spacing:-0.828px;right:1086.7px;">TOTAL OPS AND SALES WAGES</div>
<div style="position:absolute;left:55px;top:381px;width:1350px;height:1px;background:#dddbda"></div>
<div class="t s" style="top:382px;font-size:11.5px;color:#181818;line-height:20px;right:1013.6px;">71,806.05</div>
<div class="t s" style="top:382px;font-size:11.5px;color:#181818;line-height:20px;right:933px;">120,026.10</div>
<div class="t s" style="top:382px;font-size:11.5px;color:#181818;line-height:20px;right:858.6px;">93,260.14</div>
<div class="t s" style="top:382px;font-size:11.5px;color:#181818;line-height:20px;right:784.2px;">26,765.96</div>
<div class="t s" style="top:382px;font-size:11.5px;color:#181818;line-height:20px;right:689.4px;">122,261.65</div>
<div class="t s" style="top:382px;font-size:11.5px;color:#181818;line-height:20px;right:602.4px;">135,386.10</div>
<div class="t s" style="top:382px;font-size:11.5px;color:#181818;line-height:20px;right:515.4px;">138,399.44</div>
<div class="t s" style="top:382px;font-size:11.5px;color:#181818;line-height:20px;right:428.4px;">141,523.88</div>
<div class="t s" style="top:382px;font-size:11.5px;color:#181818;line-height:20px;right:341.4000000000001px;">149,287.21</div>
<div class="t s" style="top:382px;font-size:11.5px;color:#181818;line-height:20px;right:254.4000000000001px;">153,078.32</div>
<div class="t s" style="top:382px;font-size:11.5px;color:#181818;line-height:20px;right:167.4000000000001px;">156,980.55</div>
<div class="t s" style="top:382px;font-size:11.5px;color:#181818;line-height:20px;right:80.40000000000009px;">160,938.33</div>
<div class="t s" style="top:382px;font-size:11.5px;color:#181818;line-height:20px;right:-6.599999999999909px;">165,294.12</div>
<div class="t s" style="top:403px;font-size:11.5px;color:#181818;line-height:20px;letter-spacing:-0.688px;right:1086.7px;">GROSS CONTRIBUTION</div>
<div style="position:absolute;left:55px;top:402px;width:1350px;height:1px;background:#dddbda"></div>
<div class="t s" style="top:403px;font-size:11.5px;color:#181818;line-height:20px;right:1013.6px;">38,293.65</div>
<div class="t s" style="top:403px;font-size:11.5px;color:#181818;line-height:20px;right:933px;">119,586.24</div>
<div class="t s" style="top:403px;font-size:11.5px;color:#181818;line-height:20px;right:858.6px;">28,726.13</div>
<div class="t s" style="top:403px;font-size:11.5px;color:#181818;line-height:20px;right:784.2px;">90,860.11</div>
<div class="t s" style="top:403px;font-size:11.5px;color:#181818;line-height:20px;right:689.4px;">118,519.44</div>
<div class="t s" style="top:403px;font-size:11.5px;color:#181818;line-height:20px;right:602.4px;">104,625.59</div>
<div class="t s" style="top:403px;font-size:11.5px;color:#181818;line-height:20px;right:515.4px;">125,592.16</div>
<div class="t s" style="top:403px;font-size:11.5px;color:#181818;line-height:20px;right:428.4px;">140,489.87</div>
<div class="t s" style="top:403px;font-size:11.5px;color:#181818;line-height:20px;right:341.4000000000001px;">157,061.83</div>
<div class="t s" style="top:403px;font-size:11.5px;color:#181818;line-height:20px;right:254.4000000000001px;">182,520.92</div>
<div class="t s" style="top:403px;font-size:11.5px;color:#181818;line-height:20px;right:167.4000000000001px;">203,634.32</div>
<div class="t s" style="top:403px;font-size:11.5px;color:#181818;line-height:20px;right:80.40000000000009px;">190,286.22</div>
<div class="t s" style="top:403px;font-size:11.5px;color:#181818;line-height:20px;right:-6.599999999999909px;">216,094.12</div>
<div style="position:absolute;left:55px;top:423px;width:1350px;height:1px;background:#dddbda"></div>
<div class="t" style="top:424px;font-size:10.5px;color:#080707;line-height:20px;font-weight:bold;letter-spacing:0.12px;left:63.5px;">GENERAL AND ADMIN</div>
<div class="t s" style="top:444px;font-size:11.5px;color:#181818;line-height:20px;letter-spacing:-0.168px;right:1124px;">600 Advertising - US</div>
<svg style="position:absolute;left:315px;top:451px" width="6" height="9" viewBox="0 0 6 9"><polyline points="0.7,0.6 4.7,4.5 0.7,8.4" fill="none" stroke="#5e5e5e" stroke-width="1.15"/></svg>
<svg style="position:absolute;left:329.5px;top:451px" width="9" height="9" viewBox="0 0 9 9"><rect x="0" y="3.9" width="9" height="1.2" fill="#8a8a8a"/><rect x="3.9" y="0" width="1.2" height="9" fill="#8a8a8a"/></svg>
<div class="t s" style="top:444px;font-size:11.5px;color:#1f6fd6;line-height:20px;right:1013.6px;">6,699.81</div>
<div class="t s" style="top:444px;font-size:11.5px;color:#1f6fd6;line-height:20px;right:933px;">17,700.00</div>
<div class="t s" style="top:444px;font-size:11.5px;color:#1f6fd6;line-height:20px;right:858.6px;">32,255.47</div>
<div class="t s" style="top:444px;font-size:11.5px;color:#e8401f;line-height:20px;right:784.2px;">-14,555.47</div>
<div class="t s" style="top:444px;font-size:11.5px;color:#1f6fd6;line-height:20px;right:689.4px;">17,700.00</div>
<div class="t s" style="top:444px;font-size:11.5px;color:#1f6fd6;line-height:20px;right:602.4px;">17,700.00</div>
<div class="t s" style="top:444px;font-size:11.5px;color:#1f6fd6;line-height:20px;right:515.4px;">17,700.00</div>
<div class="t s" style="top:444px;font-size:11.5px;color:#1f6fd6;line-height:20px;right:428.4px;">17,700.00</div>
<div class="t s" style="top:444px;font-size:11.5px;color:#1f6fd6;line-height:20px;right:341.4000000000001px;">17,700.00</div>
<div class="t s" style="top:444px;font-size:11.5px;color:#1f6fd6;line-height:20px;right:254.4000000000001px;">17,700.00</div>
<div class="t s" style="top:444px;font-size:11.5px;color:#1f6fd6;line-height:20px;right:167.4000000000001px;">17,700.00</div>
<div class="t s" style="top:444px;font-size:11.5px;color:#1f6fd6;line-height:20px;right:80.40000000000009px;">17,700.00</div>
<div class="t s" style="top:444px;font-size:11.5px;color:#1f6fd6;line-height:20px;right:-6.599999999999909px;">17,700.00</div>
<div class="t s" style="top:464px;font-size:11.5px;color:#181818;line-height:20px;letter-spacing:-0.2px;right:1124px;">648 Client Gifts - US</div>
<svg style="position:absolute;left:315px;top:471px" width="6" height="9" viewBox="0 0 6 9"><polyline points="0.7,0.6 4.7,4.5 0.7,8.4" fill="none" stroke="#5e5e5e" stroke-width="1.15"/></svg>
<svg style="position:absolute;left:329.5px;top:471px" width="9" height="9" viewBox="0 0 9 9"><rect x="0" y="3.9" width="9" height="1.2" fill="#8a8a8a"/><rect x="3.9" y="0" width="1.2" height="9" fill="#8a8a8a"/></svg>
<div class="t s" style="top:464px;font-size:11.5px;color:#1f6fd6;line-height:20px;right:1013.6px;">266.00</div>
<div class="t s" style="top:464px;font-size:11.5px;color:#1f6fd6;line-height:20px;right:933px;">0.00</div>
<div class="t s" style="top:464px;font-size:11.5px;color:#1f6fd6;line-height:20px;right:858.6px;">50.00</div>
<div class="t s" style="top:464px;font-size:11.5px;color:#e8401f;line-height:20px;right:784.2px;">-50.00</div>
<div class="t s" style="top:464px;font-size:11.5px;color:#1f6fd6;line-height:20px;right:689.4px;">0.00</div>
<div class="t s" style="top:464px;font-size:11.5px;color:#1f6fd6;line-height:20px;right:602.4px;">0.00</div>
<div class="t s" style="top:464px;font-size:11.5px;color:#1f6fd6;line-height:20px;right:515.4px;">0.00</div>
<div class="t s" style="top:464px;font-size:11.5px;color:#1f6fd6;line-height:20px;right:428.4px;">0.00</div>
<div class="t s" style="top:464px;font-size:11.5px;color:#1f6fd6;line-height:20px;right:341.4000000000001px;">0.00</div>
<div class="t s" style="top:464px;font-size:11.5px;color:#1f6fd6;line-height:20px;right:254.4000000000001px;">0.00</div>
<div class="t s" style="top:464px;font-size:11.5px;color:#1f6fd6;line-height:20px;right:167.4000000000001px;">0.00</div>
<div class="t s" style="top:464px;font-size:11.5px;color:#1f6fd6;line-height:20px;right:80.40000000000009px;">0.00</div>
<div class="t s" style="top:464px;font-size:11.5px;color:#1f6fd6;line-height:20px;right:-6.599999999999909px;">0.00</div>
<div class="t s" style="top:484px;font-size:11.5px;color:#181818;line-height:20px;letter-spacing:-0.129px;right:1124px;">676 Dues &amp; Subscriptions - India</div>
<svg style="position:absolute;left:315px;top:491px" width="6" height="9" viewBox="0 0 6 9"><polyline points="0.7,0.6 4.7,4.5 0.7,8.4" fill="none" stroke="#5e5e5e" stroke-width="1.15"/></svg>
<svg style="position:absolute;left:329.5px;top:491px" width="9" height="9" viewBox="0 0 9 9"><rect x="0" y="3.9" width="9" height="1.2" fill="#8a8a8a"/><rect x="3.9" y="0" width="1.2" height="9" fill="#8a8a8a"/></svg>
<div class="t s" style="top:484px;font-size:11.5px;color:#1f6fd6;line-height:20px;right:1013.6px;">0.00</div>
<div class="t s" style="top:484px;font-size:11.5px;color:#1f6fd6;line-height:20px;right:933px;">0.00</div>
<div class="t s" style="top:484px;font-size:11.5px;color:#1f6fd6;line-height:20px;right:858.6px;">0.00</div>
<div class="t s" style="top:484px;font-size:11.5px;color:#1f6fd6;line-height:20px;right:784.2px;">0.00</div>
<div class="t s" style="top:484px;font-size:11.5px;color:#1f6fd6;line-height:20px;right:689.4px;">0.00</div>
<div class="t s" style="top:484px;font-size:11.5px;color:#1f6fd6;line-height:20px;right:602.4px;">0.00</div>
<div class="t s" style="top:484px;font-size:11.5px;color:#1f6fd6;line-height:20px;right:515.4px;">0.00</div>
<div class="t s" style="top:484px;font-size:11.5px;color:#1f6fd6;line-height:20px;right:428.4px;">0.00</div>
<div class="t s" style="top:484px;font-size:11.5px;color:#1f6fd6;line-height:20px;right:341.4000000000001px;">0.00</div>
<div class="t s" style="top:484px;font-size:11.5px;color:#1f6fd6;line-height:20px;right:254.4000000000001px;">0.00</div>
<div class="t s" style="top:484px;font-size:11.5px;color:#1f6fd6;line-height:20px;right:167.4000000000001px;">0.00</div>
<div class="t s" style="top:484px;font-size:11.5px;color:#1f6fd6;line-height:20px;right:80.40000000000009px;">0.00</div>
<div class="t s" style="top:484px;font-size:11.5px;color:#1f6fd6;line-height:20px;right:-6.599999999999909px;">0.00</div>
<div class="t s" style="top:504px;font-size:11.5px;color:#181818;line-height:20px;letter-spacing:-0.249px;right:1124px;">676 Dues &amp; Subscriptions - US</div>
<svg style="position:absolute;left:315px;top:511px" width="6" height="9" viewBox="0 0 6 9"><polyline points="0.7,0.6 4.7,4.5 0.7,8.4" fill="none" stroke="#5e5e5e" stroke-width="1.15"/></svg>
<svg style="position:absolute;left:329.5px;top:511px" width="9" height="9" viewBox="0 0 9 9"><rect x="0" y="3.9" width="9" height="1.2" fill="#8a8a8a"/><rect x="3.9" y="0" width="1.2" height="9" fill="#8a8a8a"/></svg>
<div class="t s" style="top:504px;font-size:11.5px;color:#1f6fd6;line-height:20px;right:1013.6px;">14,674.60</div>
<div class="t s" style="top:504px;font-size:11.5px;color:#1f6fd6;line-height:20px;right:933px;">52,384.02</div>
<div class="t s" style="top:504px;font-size:11.5px;color:#1f6fd6;line-height:20px;right:858.6px;">14,484.97</div>
<div class="t s" style="top:504px;font-size:11.5px;color:#1f6fd6;line-height:20px;right:784.2px;">37,899.05</div>
<div class="t s" style="top:504px;font-size:11.5px;color:#1f6fd6;line-height:20px;right:689.4px;">52,384.02</div>
<div class="t s" style="top:504px;font-size:11.5px;color:#1f6fd6;line-height:20px;right:602.4px;">63,254.02</div>
<div class="t s" style="top:504px;font-size:11.5px;color:#1f6fd6;line-height:20px;right:515.4px;">63,254.02</div>
<div class="t s" style="top:504px;font-size:11.5px;color:#1f6fd6;line-height:20px;right:428.4px;">63,254.02</div>
<div class="t s" style="top:504px;font-size:11.5px;color:#1f6fd6;line-height:20px;right:341.4000000000001px;">68,594.02</div>
<div class="t s" style="top:504px;font-size:11.5px;color:#1f6fd6;line-height:20px;right:254.4000000000001px;">68,594.02</div>
<div class="t s" style="top:504px;font-size:11.5px;color:#1f6fd6;line-height:20px;right:167.4000000000001px;">68,594.02</div>
<div class="t s" style="top:504px;font-size:11.5px;color:#1f6fd6;line-height:20px;right:80.40000000000009px;">68,594.02</div>
<div class="t s" style="top:504px;font-size:11.5px;color:#1f6fd6;line-height:20px;right:-6.599999999999909px;">68,594.02</div>
<div class="t s" style="top:524px;font-size:11.5px;color:#181818;line-height:20px;letter-spacing:-0.208px;right:1124px;">628 General Expenses - India</div>
<svg style="position:absolute;left:315px;top:531px" width="6" height="9" viewBox="0 0 6 9"><polyline points="0.7,0.6 4.7,4.5 0.7,8.4" fill="none" stroke="#5e5e5e" stroke-width="1.15"/></svg>
<svg style="position:absolute;left:329.5px;top:531px" width="9" height="9" viewBox="0 0 9 9"><rect x="0" y="3.9" width="9" height="1.2" fill="#8a8a8a"/><rect x="3.9" y="0" width="1.2" height="9" fill="#8a8a8a"/></svg>
<div class="t s" style="top:524px;font-size:11.5px;color:#1f6fd6;line-height:20px;right:1013.6px;">0.00</div>
<div class="t s" style="top:524px;font-size:11.5px;color:#1f6fd6;line-height:20px;right:933px;">0.00</div>
<div class="t s" style="top:524px;font-size:11.5px;color:#1f6fd6;line-height:20px;right:858.6px;">0.00</div>
<div class="t s" style="top:524px;font-size:11.5px;color:#1f6fd6;line-height:20px;right:784.2px;">0.00</div>
<div class="t s" style="top:524px;font-size:11.5px;color:#1f6fd6;line-height:20px;right:689.4px;">0.00</div>
<div class="t s" style="top:524px;font-size:11.5px;color:#1f6fd6;line-height:20px;right:602.4px;">0.00</div>
<div class="t s" style="top:524px;font-size:11.5px;color:#1f6fd6;line-height:20px;right:515.4px;">0.00</div>
<div class="t s" style="top:524px;font-size:11.5px;color:#1f6fd6;line-height:20px;right:428.4px;">0.00</div>
<div class="t s" style="top:524px;font-size:11.5px;color:#1f6fd6;line-height:20px;right:341.4000000000001px;">0.00</div>
<div class="t s" style="top:524px;font-size:11.5px;color:#1f6fd6;line-height:20px;right:254.4000000000001px;">0.00</div>
<div class="t s" style="top:524px;font-size:11.5px;color:#1f6fd6;line-height:20px;right:167.4000000000001px;">0.00</div>
<div class="t s" style="top:524px;font-size:11.5px;color:#1f6fd6;line-height:20px;right:80.40000000000009px;">0.00</div>
<div class="t s" style="top:524px;font-size:11.5px;color:#1f6fd6;line-height:20px;right:-6.599999999999909px;">0.00</div>
<div class="t s" style="top:544px;font-size:11.5px;color:#181818;line-height:20px;letter-spacing:-0.354px;right:1124px;">628 General Expenses - US</div>
<svg style="position:absolute;left:315px;top:551px" width="6" height="9" viewBox="0 0 6 9"><polyline points="0.7,0.6 4.7,4.5 0.7,8.4" fill="none" stroke="#5e5e5e" stroke-width="1.15"/></svg>
<svg style="position:absolute;left:329.5px;top:551px" width="9" height="9" viewBox="0 0 9 9"><rect x="0" y="3.9" width="9" height="1.2" fill="#8a8a8a"/><rect x="3.9" y="0" width="1.2" height="9" fill="#8a8a8a"/></svg>
<div class="t s" style="top:544px;font-size:11.5px;color:#1f6fd6;line-height:20px;right:1013.6px;">1,525.37</div>
<div class="t s" style="top:544px;font-size:11.5px;color:#1f6fd6;line-height:20px;right:933px;">700.00</div>
<div class="t s" style="top:544px;font-size:11.5px;color:#1f6fd6;line-height:20px;right:858.6px;">4,837.35</div>
<div class="t s" style="top:544px;font-size:11.5px;color:#e8401f;line-height:20px;right:784.2px;">-4,137.35</div>
<div class="t s" style="top:544px;font-size:11.5px;color:#1f6fd6;line-height:20px;right:689.4px;">700.00</div>
<div class="t s" style="top:544px;font-size:11.5px;color:#1f6fd6;line-height:20px;right:602.4px;">700.00</div>
<div class="t s" style="top:544px;font-size:11.5px;color:#1f6fd6;line-height:20px;right:515.4px;">700.00</div>
<div class="t s" style="top:544px;font-size:11.5px;color:#1f6fd6;line-height:20px;right:428.4px;">700.00</div>
<div class="t s" style="top:544px;font-size:11.5px;color:#1f6fd6;line-height:20px;right:341.4000000000001px;">700.00</div>
<div class="t s" style="top:544px;font-size:11.5px;color:#1f6fd6;line-height:20px;right:254.4000000000001px;">700.00</div>
<div class="t s" style="top:544px;font-size:11.5px;color:#1f6fd6;line-height:20px;right:167.4000000000001px;">700.00</div>
<div class="t s" style="top:544px;font-size:11.5px;color:#1f6fd6;line-height:20px;right:80.40000000000009px;">700.00</div>
<div class="t s" style="top:544px;font-size:11.5px;color:#1f6fd6;line-height:20px;right:-6.599999999999909px;">700.00</div>
<div class="t s" style="top:564px;font-size:11.5px;color:#181818;line-height:20px;letter-spacing:-0.072px;right:1124px;">632 Insurance - India</div>
<svg style="position:absolute;left:315px;top:571px" width="6" height="9" viewBox="0 0 6 9"><polyline points="0.7,0.6 4.7,4.5 0.7,8.4" fill="none" stroke="#5e5e5e" stroke-width="1.15"/></svg>
<svg style="position:absolute;left:329.5px;top:571px" width="9" height="9" viewBox="0 0 9 9"><rect x="0" y="3.9" width="9" height="1.2" fill="#8a8a8a"/><rect x="3.9" y="0" width="1.2" height="9" fill="#8a8a8a"/></svg>
<div class="t s" style="top:564px;font-size:11.5px;color:#1f6fd6;line-height:20px;right:1013.6px;">0.00</div>
<div class="t s" style="top:564px;font-size:11.5px;color:#1f6fd6;line-height:20px;right:933px;">0.00</div>
<div class="t s" style="top:564px;font-size:11.5px;color:#1f6fd6;line-height:20px;right:858.6px;">0.00</div>
<div class="t s" style="top:564px;font-size:11.5px;color:#1f6fd6;line-height:20px;right:784.2px;">0.00</div>
<div class="t s" style="top:564px;font-size:11.5px;color:#1f6fd6;line-height:20px;right:689.4px;">0.00</div>
<div class="t s" style="top:564px;font-size:11.5px;color:#1f6fd6;line-height:20px;right:602.4px;">0.00</div>
<div class="t s" style="top:564px;font-size:11.5px;color:#1f6fd6;line-height:20px;right:515.4px;">0.00</div>
<div class="t s" style="top:564px;font-size:11.5px;color:#1f6fd6;line-height:20px;right:428.4px;">0.00</div>
<div class="t s" style="top:564px;font-size:11.5px;color:#1f6fd6;line-height:20px;right:341.4000000000001px;">0.00</div>
<div class="t s" style="top:564px;font-size:11.5px;color:#1f6fd6;line-height:20px;right:254.4000000000001px;">0.00</div>
<div class="t s" style="top:564px;font-size:11.5px;color:#1f6fd6;line-height:20px;right:167.4000000000001px;">0.00</div>
<div class="t s" style="top:564px;font-size:11.5px;color:#1f6fd6;line-height:20px;right:80.40000000000009px;">0.00</div>
<div class="t s" style="top:564px;font-size:11.5px;color:#1f6fd6;line-height:20px;right:-6.599999999999909px;">0.00</div>
<div class="t s" style="top:584px;font-size:11.5px;color:#181818;line-height:20px;letter-spacing:-0.2px;right:1124px;">632 Insurance - US</div>
<svg style="position:absolute;left:315px;top:591px" width="6" height="9" viewBox="0 0 6 9"><polyline points="0.7,0.6 4.7,4.5 0.7,8.4" fill="none" stroke="#5e5e5e" stroke-width="1.15"/></svg>
<svg style="position:absolute;left:329.5px;top:591px" width="9" height="9" viewBox="0 0 9 9"><rect x="0" y="3.9" width="9" height="1.2" fill="#8a8a8a"/><rect x="3.9" y="0" width="1.2" height="9" fill="#8a8a8a"/></svg>
<div class="t s" style="top:584px;font-size:11.5px;color:#1f6fd6;line-height:20px;right:1013.6px;">13,304.88</div>
<div class="t s" style="top:584px;font-size:11.5px;color:#1f6fd6;line-height:20px;right:933px;">14,221.85</div>
<div class="t s" style="top:584px;font-size:11.5px;color:#1f6fd6;line-height:20px;right:858.6px;">9,652.69</div>
<div class="t s" style="top:584px;font-size:11.5px;color:#1f6fd6;line-height:20px;right:784.2px;">4,569.16</div>
<div class="t s" style="top:584px;font-size:11.5px;color:#1f6fd6;line-height:20px;right:689.4px;">14,221.85</div>
<div class="t s" style="top:584px;font-size:11.5px;color:#1f6fd6;line-height:20px;right:602.4px;">16,701.85</div>
<div class="t s" style="top:584px;font-size:11.5px;color:#1f6fd6;line-height:20px;right:515.4px;">16,701.85</div>
<div class="t s" style="top:584px;font-size:11.5px;color:#1f6fd6;line-height:20px;right:428.4px;">16,701.85</div>
<div class="t s" style="top:584px;font-size:11.5px;color:#1f6fd6;line-height:20px;right:341.4000000000001px;">17,941.85</div>
<div class="t s" style="top:584px;font-size:11.5px;color:#1f6fd6;line-height:20px;right:254.4000000000001px;">17,941.85</div>
<div class="t s" style="top:584px;font-size:11.5px;color:#1f6fd6;line-height:20px;right:167.4000000000001px;">17,941.85</div>
<div class="t s" style="top:584px;font-size:11.5px;color:#1f6fd6;line-height:20px;right:80.40000000000009px;">17,941.85</div>
<div class="t s" style="top:584px;font-size:11.5px;color:#1f6fd6;line-height:20px;right:-6.599999999999909px;">17,941.85</div>
<div class="t s" style="top:604px;font-size:11.5px;color:#181818;line-height:20px;letter-spacing:-0.095px;right:1124px;">608 Internal IT Costs - India</div>
<svg style="position:absolute;left:315px;top:611px" width="6" height="9" viewBox="0 0 6 9"><polyline points="0.7,0.6 4.7,4.5 0.7,8.4" fill="none" stroke="#5e5e5e" stroke-width="1.15"/></svg>
<svg style="position:absolute;left:329.5px;top:611px" width="9" height="9" viewBox="0 0 9 9"><rect x="0" y="3.9" width="9" height="1.2" fill="#8a8a8a"/><rect x="3.9" y="0" width="1.2" height="9" fill="#8a8a8a"/></svg>
<div class="t s" style="top:604px;font-size:11.5px;color:#1f6fd6;line-height:20px;right:1013.6px;">0.00</div>
<div class="t s" style="top:604px;font-size:11.5px;color:#1f6fd6;line-height:20px;right:933px;">0.00</div>
<div class="t s" style="top:604px;font-size:11.5px;color:#1f6fd6;line-height:20px;right:858.6px;">0.00</div>
<div class="t s" style="top:604px;font-size:11.5px;color:#1f6fd6;line-height:20px;right:784.2px;">0.00</div>
<div class="t s" style="top:604px;font-size:11.5px;color:#1f6fd6;line-height:20px;right:689.4px;">0.00</div>
<div class="t s" style="top:604px;font-size:11.5px;color:#1f6fd6;line-height:20px;right:602.4px;">0.00</div>
<div class="t s" style="top:604px;font-size:11.5px;color:#1f6fd6;line-height:20px;right:515.4px;">0.00</div>
<div class="t s" style="top:604px;font-size:11.5px;color:#1f6fd6;line-height:20px;right:428.4px;">0.00</div>
<div class="t s" style="top:604px;font-size:11.5px;color:#1f6fd6;line-height:20px;right:341.4000000000001px;">0.00</div>
<div class="t s" style="top:604px;font-size:11.5px;color:#1f6fd6;line-height:20px;right:254.4000000000001px;">0.00</div>
<div class="t s" style="top:604px;font-size:11.5px;color:#1f6fd6;line-height:20px;right:167.4000000000001px;">0.00</div>
<div class="t s" style="top:604px;font-size:11.5px;color:#1f6fd6;line-height:20px;right:80.40000000000009px;">0.00</div>
<div class="t s" style="top:604px;font-size:11.5px;color:#1f6fd6;line-height:20px;right:-6.599999999999909px;">0.00</div>
<div class="t s" style="top:624px;font-size:11.5px;color:#181818;line-height:20px;letter-spacing:-0.224px;right:1124px;">608 Internal IT Costs - US</div>
<svg style="position:absolute;left:315px;top:631px" width="6" height="9" viewBox="0 0 6 9"><polyline points="0.7,0.6 4.7,4.5 0.7,8.4" fill="none" stroke="#5e5e5e" stroke-width="1.15"/></svg>
<svg style="position:absolute;left:329.5px;top:631px" width="9" height="9" viewBox="0 0 9 9"><rect x="0" y="3.9" width="9" height="1.2" fill="#8a8a8a"/><rect x="3.9" y="0" width="1.2" height="9" fill="#8a8a8a"/></svg>
<div class="t s" style="top:624px;font-size:11.5px;color:#1f6fd6;line-height:20px;right:1013.6px;">209.18</div>
<div class="t s" style="top:624px;font-size:11.5px;color:#1f6fd6;line-height:20px;right:933px;">0.00</div>
<div class="t s" style="top:624px;font-size:11.5px;color:#1f6fd6;line-height:20px;right:858.6px;">209.23</div>
<div class="t s" style="top:624px;font-size:11.5px;color:#e8401f;line-height:20px;right:784.2px;">-209.23</div>
<div class="t s" style="top:624px;font-size:11.5px;color:#1f6fd6;line-height:20px;right:689.4px;">0.00</div>
<div class="t s" style="top:624px;font-size:11.5px;color:#1f6fd6;line-height:20px;right:602.4px;">0.00</div>
<div class="t s" style="top:624px;font-size:11.5px;color:#1f6fd6;line-height:20px;right:515.4px;">0.00</div>
<div class="t s" style="top:624px;font-size:11.5px;color:#1f6fd6;line-height:20px;right:428.4px;">0.00</div>
<div class="t s" style="top:624px;font-size:11.5px;color:#1f6fd6;line-height:20px;right:341.4000000000001px;">0.00</div>
<div class="t s" style="top:624px;font-size:11.5px;color:#1f6fd6;line-height:20px;right:254.4000000000001px;">0.00</div>
<div class="t s" style="top:624px;font-size:11.5px;color:#1f6fd6;line-height:20px;right:167.4000000000001px;">0.00</div>
<div class="t s" style="top:624px;font-size:11.5px;color:#1f6fd6;line-height:20px;right:80.40000000000009px;">0.00</div>
<div class="t s" style="top:624px;font-size:11.5px;color:#1f6fd6;line-height:20px;right:-6.599999999999909px;">0.00</div>
<div class="t s" style="top:644px;font-size:11.5px;color:#181818;line-height:20px;letter-spacing:-0.223px;right:1124px;">640 Legal Expenses - India</div>
<svg style="position:absolute;left:315px;top:651px" width="6" height="9" viewBox="0 0 6 9"><polyline points="0.7,0.6 4.7,4.5 0.7,8.4" fill="none" stroke="#5e5e5e" stroke-width="1.15"/></svg>
<svg style="position:absolute;left:329.5px;top:651px" width="9" height="9" viewBox="0 0 9 9"><rect x="0" y="3.9" width="9" height="1.2" fill="#8a8a8a"/><rect x="3.9" y="0" width="1.2" height="9" fill="#8a8a8a"/></svg>
<div class="t s" style="top:644px;font-size:11.5px;color:#1f6fd6;line-height:20px;right:1013.6px;">0.00</div>
<div class="t s" style="top:644px;font-size:11.5px;color:#1f6fd6;line-height:20px;right:933px;">0.00</div>
<div class="t s" style="top:644px;font-size:11.5px;color:#1f6fd6;line-height:20px;right:858.6px;">0.00</div>
<div class="t s" style="top:644px;font-size:11.5px;color:#1f6fd6;line-height:20px;right:784.2px;">0.00</div>
<div class="t s" style="top:644px;font-size:11.5px;color:#1f6fd6;line-height:20px;right:689.4px;">0.00</div>
<div class="t s" style="top:644px;font-size:11.5px;color:#1f6fd6;line-height:20px;right:602.4px;">0.00</div>
<div class="t s" style="top:644px;font-size:11.5px;color:#1f6fd6;line-height:20px;right:515.4px;">0.00</div>
<div class="t s" style="top:644px;font-size:11.5px;color:#1f6fd6;line-height:20px;right:428.4px;">0.00</div>
<div class="t s" style="top:644px;font-size:11.5px;color:#1f6fd6;line-height:20px;right:341.4000000000001px;">0.00</div>
<div class="t s" style="top:644px;font-size:11.5px;color:#1f6fd6;line-height:20px;right:254.4000000000001px;">0.00</div>
<div class="t s" style="top:644px;font-size:11.5px;color:#1f6fd6;line-height:20px;right:167.4000000000001px;">0.00</div>
<div class="t s" style="top:644px;font-size:11.5px;color:#1f6fd6;line-height:20px;right:80.40000000000009px;">0.00</div>
<div class="t s" style="top:644px;font-size:11.5px;color:#1f6fd6;line-height:20px;right:-6.599999999999909px;">0.00</div>
<div class="t s" style="top:664px;font-size:11.5px;color:#181818;line-height:20px;letter-spacing:-0.386px;right:1124px;">640 Legal Expenses - US</div>
<svg style="position:absolute;left:315px;top:671px" width="6" height="9" viewBox="0 0 6 9"><polyline points="0.7,0.6 4.7,4.5 0.7,8.4" fill="none" stroke="#5e5e5e" stroke-width="1.15"/></svg>
<svg style="position:absolute;left:329.5px;top:671px" width="9" height="9" viewBox="0 0 9 9"><rect x="0" y="3.9" width="9" height="1.2" fill="#8a8a8a"/><rect x="3.9" y="0" width="1.2" height="9" fill="#8a8a8a"/></svg>
<div class="t s" style="top:664px;font-size:11.5px;color:#1f6fd6;line-height:20px;right:1013.6px;">16,568.50</div>
<div class="t s" style="top:664px;font-size:11.5px;color:#1f6fd6;line-height:20px;right:933px;">5,200.00</div>
<div class="t s" style="top:664px;font-size:11.5px;color:#1f6fd6;line-height:20px;right:858.6px;">7,121.95</div>
<div class="t s" style="top:664px;font-size:11.5px;color:#e8401f;line-height:20px;right:784.2px;">-1,921.95</div>
<div class="t s" style="top:664px;font-size:11.5px;color:#1f6fd6;line-height:20px;right:689.4px;">5,200.00</div>
<div class="t s" style="top:664px;font-size:11.5px;color:#1f6fd6;line-height:20px;right:602.4px;">5,200.00</div>
<div class="t s" style="top:664px;font-size:11.5px;color:#1f6fd6;line-height:20px;right:515.4px;">5,200.00</div>
<div class="t s" style="top:664px;font-size:11.5px;color:#1f6fd6;line-height:20px;right:428.4px;">5,200.00</div>
<div class="t s" style="top:664px;font-size:11.5px;color:#1f6fd6;line-height:20px;right:341.4000000000001px;">5,200.00</div>
<div class="t s" style="top:664px;font-size:11.5px;color:#1f6fd6;line-height:20px;right:254.4000000000001px;">5,200.00</div>
<div class="t s" style="top:664px;font-size:11.5px;color:#1f6fd6;line-height:20px;right:167.4000000000001px;">5,200.00</div>
<div class="t s" style="top:664px;font-size:11.5px;color:#1f6fd6;line-height:20px;right:80.40000000000009px;">5,200.00</div>
<div class="t s" style="top:664px;font-size:11.5px;color:#1f6fd6;line-height:20px;right:-6.599999999999909px;">5,200.00</div>
<div class="t s" style="top:684px;font-size:11.5px;color:#181818;line-height:20px;letter-spacing:-0.285px;right:1124px;">652 Office Expenses - US</div>
<svg style="position:absolute;left:315px;top:691px" width="6" height="9" viewBox="0 0 6 9"><polyline points="0.7,0.6 4.7,4.5 0.7,8.4" fill="none" stroke="#5e5e5e" stroke-width="1.15"/></svg>
<svg style="position:absolute;left:329.5px;top:691px" width="9" height="9" viewBox="0 0 9 9"><rect x="0" y="3.9" width="9" height="1.2" fill="#8a8a8a"/><rect x="3.9" y="0" width="1.2" height="9" fill="#8a8a8a"/></svg>
<div class="t s" style="top:684px;font-size:11.5px;color:#1f6fd6;line-height:20px;right:1013.6px;">1,569.19</div>
<div class="t s" style="top:684px;font-size:11.5px;color:#1f6fd6;line-height:20px;right:933px;">2,500.00</div>
<div class="t s" style="top:684px;font-size:11.5px;color:#1f6fd6;line-height:20px;right:858.6px;">1,150.01</div>
<div class="t s" style="top:684px;font-size:11.5px;color:#1f6fd6;line-height:20px;right:784.2px;">1,349.99</div>
<div class="t s" style="top:684px;font-size:11.5px;color:#1f6fd6;line-height:20px;right:689.4px;">2,500.00</div>
<div class="t s" style="top:684px;font-size:11.5px;color:#1f6fd6;line-height:20px;right:602.4px;">2,500.00</div>
<div class="t s" style="top:684px;font-size:11.5px;color:#1f6fd6;line-height:20px;right:515.4px;">2,500.00</div>
<div class="t s" style="top:684px;font-size:11.5px;color:#1f6fd6;line-height:20px;right:428.4px;">2,500.00</div>
<div class="t s" style="top:684px;font-size:11.5px;color:#1f6fd6;line-height:20px;right:341.4000000000001px;">2,500.00</div>
<div class="t s" style="top:684px;font-size:11.5px;color:#1f6fd6;line-height:20px;right:254.4000000000001px;">2,500.00</div>
<div class="t s" style="top:684px;font-size:11.5px;color:#1f6fd6;line-height:20px;right:167.4000000000001px;">2,500.00</div>
<div class="t s" style="top:684px;font-size:11.5px;color:#1f6fd6;line-height:20px;right:80.40000000000009px;">2,500.00</div>
<div class="t s" style="top:684px;font-size:11.5px;color:#1f6fd6;line-height:20px;right:-6.599999999999909px;">2,500.00</div>
<div class="t s" style="top:704px;font-size:11.5px;color:#181818;line-height:20px;letter-spacing:-0.367px;right:1124px;">672 Payroll Tax Expense - US</div>
<svg style="position:absolute;left:315px;top:711px" width="6" height="9" viewBox="0 0 6 9"><polyline points="0.7,0.6 4.7,4.5 0.7,8.4" fill="none" stroke="#5e5e5e" stroke-width="1.15"/></svg>
<svg style="position:absolute;left:329.5px;top:711px" width="9" height="9" viewBox="0 0 9 9"><rect x="0" y="3.9" width="9" height="1.2" fill="#8a8a8a"/><rect x="3.9" y="0" width="1.2" height="9" fill="#8a8a8a"/></svg>
<div class="t s" style="top:704px;font-size:11.5px;color:#1f6fd6;line-height:20px;right:1013.6px;">8,183.09</div>
<div class="t s" style="top:704px;font-size:11.5px;color:#1f6fd6;line-height:20px;right:933px;">15,974.84</div>
<div class="t s" style="top:704px;font-size:11.5px;color:#1f6fd6;line-height:20px;right:858.6px;">10,220.49</div>
<div class="t s" style="top:704px;font-size:11.5px;color:#1f6fd6;line-height:20px;right:784.2px;">5,754.35</div>
<div class="t s" style="top:704px;font-size:11.5px;color:#1f6fd6;line-height:20px;right:689.4px;">13,129.98</div>
<div class="t s" style="top:704px;font-size:11.5px;color:#1f6fd6;line-height:20px;right:602.4px;">14,023.75</div>
<div class="t s" style="top:704px;font-size:11.5px;color:#1f6fd6;line-height:20px;right:515.4px;">16,948.94</div>
<div class="t s" style="top:704px;font-size:11.5px;color:#1f6fd6;line-height:20px;right:428.4px;">14,023.74</div>
<div class="t s" style="top:704px;font-size:11.5px;color:#1f6fd6;line-height:20px;right:341.4000000000001px;">14,401.87</div>
<div class="t s" style="top:704px;font-size:11.5px;color:#1f6fd6;line-height:20px;right:254.4000000000001px;">17,327.06</div>
<div class="t s" style="top:704px;font-size:11.5px;color:#1f6fd6;line-height:20px;right:167.4000000000001px;">14,401.87</div>
<div class="t s" style="top:704px;font-size:11.5px;color:#1f6fd6;line-height:20px;right:80.40000000000009px;">14,401.86</div>
<div class="t s" style="top:704px;font-size:11.5px;color:#1f6fd6;line-height:20px;right:-6.599999999999909px;">17,327.06</div>
<div class="t s" style="top:724px;font-size:11.5px;color:#181818;line-height:20px;letter-spacing:-0.306px;right:1124px;">624 Postage &amp; Delivery - US</div>
<svg style="position:absolute;left:315px;top:731px" width="6" height="9" viewBox="0 0 6 9"><polyline points="0.7,0.6 4.7,4.5 0.7,8.4" fill="none" stroke="#5e5e5e" stroke-width="1.15"/></svg>
<svg style="position:absolute;left:329.5px;top:731px" width="9" height="9" viewBox="0 0 9 9"><rect x="0" y="3.9" width="9" height="1.2" fill="#8a8a8a"/><rect x="3.9" y="0" width="1.2" height="9" fill="#8a8a8a"/></svg>
<div class="t s" style="top:724px;font-size:11.5px;color:#1f6fd6;line-height:20px;right:1013.6px;">266.20</div>
<div class="t s" style="top:724px;font-size:11.5px;color:#1f6fd6;line-height:20px;right:933px;">150.00</div>
<div class="t s" style="top:724px;font-size:11.5px;color:#1f6fd6;line-height:20px;right:858.6px;">117.20</div>
<div class="t s" style="top:724px;font-size:11.5px;color:#1f6fd6;line-height:20px;right:784.2px;">32.80</div>
<div class="t s" style="top:724px;font-size:11.5px;color:#1f6fd6;line-height:20px;right:689.4px;">150.00</div>
<div class="t s" style="top:724px;font-size:11.5px;color:#1f6fd6;line-height:20px;right:602.4px;">150.00</div>
<div class="t s" style="top:724px;font-size:11.5px;color:#1f6fd6;line-height:20px;right:515.4px;">150.00</div>
<div class="t s" style="top:724px;font-size:11.5px;color:#1f6fd6;line-height:20px;right:428.4px;">150.00</div>
<div class="t s" style="top:724px;font-size:11.5px;color:#1f6fd6;line-height:20px;right:341.4000000000001px;">150.00</div>
<div class="t s" style="top:724px;font-size:11.5px;color:#1f6fd6;line-height:20px;right:254.4000000000001px;">150.00</div>
<div class="t s" style="top:724px;font-size:11.5px;color:#1f6fd6;line-height:20px;right:167.4000000000001px;">150.00</div>
<div class="t s" style="top:724px;font-size:11.5px;color:#1f6fd6;line-height:20px;right:80.40000000000009px;">150.00</div>
<div class="t s" style="top:724px;font-size:11.5px;color:#1f6fd6;line-height:20px;right:-6.599999999999909px;">150.00</div>
<div class="t s" style="top:744px;font-size:11.5px;color:#181818;line-height:20px;letter-spacing:-0.178px;right:1124px;">664 Professional Development &amp; Incentives - US</div>
<svg style="position:absolute;left:315px;top:751px" width="6" height="9" viewBox="0 0 6 9"><polyline points="0.7,0.6 4.7,4.5 0.7,8.4" fill="none" stroke="#5e5e5e" stroke-width="1.15"/></svg>
<svg style="position:absolute;left:329.5px;top:751px" width="9" height="9" viewBox="0 0 9 9"><rect x="0" y="3.9" width="9" height="1.2" fill="#8a8a8a"/><rect x="3.9" y="0" width="1.2" height="9" fill="#8a8a8a"/></svg>
<div class="t s" style="top:744px;font-size:11.5px;color:#1f6fd6;line-height:20px;right:1013.6px;">1,954.16</div>
<div class="t s" style="top:744px;font-size:11.5px;color:#1f6fd6;line-height:20px;right:933px;">500.00</div>
<div class="t s" style="top:744px;font-size:11.5px;color:#1f6fd6;line-height:20px;right:858.6px;">3,231.67</div>
<div class="t s" style="top:744px;font-size:11.5px;color:#e8401f;line-height:20px;right:784.2px;">-2,731.67</div>
<div class="t s" style="top:744px;font-size:11.5px;color:#1f6fd6;line-height:20px;right:689.4px;">500.00</div>
<div class="t s" style="top:744px;font-size:11.5px;color:#1f6fd6;line-height:20px;right:602.4px;">500.00</div>
<div class="t s" style="top:744px;font-size:11.5px;color:#1f6fd6;line-height:20px;right:515.4px;">500.00</div>
<div class="t s" style="top:744px;font-size:11.5px;color:#1f6fd6;line-height:20px;right:428.4px;">500.00</div>
<div class="t s" style="top:744px;font-size:11.5px;color:#1f6fd6;line-height:20px;right:341.4000000000001px;">500.00</div>
<div class="t s" style="top:744px;font-size:11.5px;color:#1f6fd6;line-height:20px;right:254.4000000000001px;">500.00</div>
<div class="t s" style="top:744px;font-size:11.5px;color:#1f6fd6;line-height:20px;right:167.4000000000001px;">500.00</div>
<div class="t s" style="top:744px;font-size:11.5px;color:#1f6fd6;line-height:20px;right:80.40000000000009px;">500.00</div>
<div class="t s" style="top:744px;font-size:11.5px;color:#1f6fd6;line-height:20px;right:-6.599999999999909px;">500.00</div>
<div class="t s" style="top:764px;font-size:11.5px;color:#181818;line-height:20px;letter-spacing:-0.372px;right:1124px;">612 Professional Fees - US</div>
<svg style="position:absolute;left:315px;top:771px" width="6" height="9" viewBox="0 0 6 9"><polyline points="0.7,0.6 4.7,4.5 0.7,8.4" fill="none" stroke="#5e5e5e" stroke-width="1.15"/></svg>
<svg style="position:absolute;left:329.5px;top:771px" width="9" height="9" viewBox="0 0 9 9"><rect x="0" y="3.9" width="9" height="1.2" fill="#8a8a8a"/><rect x="3.9" y="0" width="1.2" height="9" fill="#8a8a8a"/></svg>
<div class="t s" style="top:764px;font-size:11.5px;color:#1f6fd6;line-height:20px;right:1013.6px;">75.87</div>
<div class="t s" style="top:764px;font-size:11.5px;color:#1f6fd6;line-height:20px;right:933px;">750.00</div>
<div class="t s" style="top:764px;font-size:11.5px;color:#1f6fd6;line-height:20px;right:858.6px;">31,507.14</div>
<div class="t s" style="top:764px;font-size:11.5px;color:#e8401f;line-height:20px;right:784.2px;">-30,757.14</div>
<div class="t s" style="top:764px;font-size:11.5px;color:#1f6fd6;line-height:20px;right:689.4px;">750.00</div>
<div class="t s" style="top:764px;font-size:11.5px;color:#1f6fd6;line-height:20px;right:602.4px;">750.00</div>
<div class="t s" style="top:764px;font-size:11.5px;color:#1f6fd6;line-height:20px;right:515.4px;">750.00</div>
<div class="t s" style="top:764px;font-size:11.5px;color:#1f6fd6;line-height:20px;right:428.4px;">750.00</div>
<div class="t s" style="top:764px;font-size:11.5px;color:#1f6fd6;line-height:20px;right:341.4000000000001px;">750.00</div>
<div class="t s" style="top:764px;font-size:11.5px;color:#1f6fd6;line-height:20px;right:254.4000000000001px;">750.00</div>
<div class="t s" style="top:764px;font-size:11.5px;color:#1f6fd6;line-height:20px;right:167.4000000000001px;">750.00</div>
<div class="t s" style="top:764px;font-size:11.5px;color:#1f6fd6;line-height:20px;right:80.40000000000009px;">750.00</div>
<div class="t s" style="top:764px;font-size:11.5px;color:#1f6fd6;line-height:20px;right:-6.599999999999909px;">750.00</div>
<div class="t s" style="top:784px;font-size:11.5px;color:#181818;line-height:20px;letter-spacing:-0.21px;right:1124px;">656 Recruiting - US</div>
<svg style="position:absolute;left:315px;top:791px" width="6" height="9" viewBox="0 0 6 9"><polyline points="0.7,0.6 4.7,4.5 0.7,8.4" fill="none" stroke="#5e5e5e" stroke-width="1.15"/></svg>
<svg style="position:absolute;left:329.5px;top:791px" width="9" height="9" viewBox="0 0 9 9"><rect x="0" y="3.9" width="9" height="1.2" fill="#8a8a8a"/><rect x="3.9" y="0" width="1.2" height="9" fill="#8a8a8a"/></svg>
<div class="t s" style="top:784px;font-size:11.5px;color:#1f6fd6;line-height:20px;right:1013.6px;">1,792.34</div>
<div class="t s" style="top:784px;font-size:11.5px;color:#1f6fd6;line-height:20px;right:933px;">2,500.00</div>
<div class="t s" style="top:784px;font-size:11.5px;color:#1f6fd6;line-height:20px;right:858.6px;">14,758.26</div>
<div class="t s" style="top:784px;font-size:11.5px;color:#e8401f;line-height:20px;right:784.2px;">-12,258.26</div>
<div class="t s" style="top:784px;font-size:11.5px;color:#1f6fd6;line-height:20px;right:689.4px;">2,500.00</div>
<div class="t s" style="top:784px;font-size:11.5px;color:#1f6fd6;line-height:20px;right:602.4px;">2,500.00</div>
<div class="t s" style="top:784px;font-size:11.5px;color:#1f6fd6;line-height:20px;right:515.4px;">2,500.00</div>
<div class="t s" style="top:784px;font-size:11.5px;color:#1f6fd6;line-height:20px;right:428.4px;">2,500.00</div>
<div class="t s" style="top:784px;font-size:11.5px;color:#1f6fd6;line-height:20px;right:341.4000000000001px;">2,500.00</div>
<div class="t s" style="top:784px;font-size:11.5px;color:#1f6fd6;line-height:20px;right:254.4000000000001px;">2,500.00</div>
<div class="t s" style="top:784px;font-size:11.5px;color:#1f6fd6;line-height:20px;right:167.4000000000001px;">2,500.00</div>
<div class="t s" style="top:784px;font-size:11.5px;color:#1f6fd6;line-height:20px;right:80.40000000000009px;">2,500.00</div>
<div class="t s" style="top:784px;font-size:11.5px;color:#1f6fd6;line-height:20px;right:-6.599999999999909px;">2,500.00</div>
<div class="t s" style="top:804px;font-size:11.5px;color:#181818;line-height:20px;letter-spacing:-0.083px;right:1124px;">660 Rent - India</div>
<svg style="position:absolute;left:315px;top:811px" width="6" height="9" viewBox="0 0 6 9"><polyline points="0.7,0.6 4.7,4.5 0.7,8.4" fill="none" stroke="#5e5e5e" stroke-width="1.15"/></svg>
<svg style="position:absolute;left:329.5px;top:811px" width="9" height="9" viewBox="0 0 9 9"><rect x="0" y="3.9" width="9" height="1.2" fill="#8a8a8a"/><rect x="3.9" y="0" width="1.2" height="9" fill="#8a8a8a"/></svg>
<div class="t s" style="top:804px;font-size:11.5px;color:#1f6fd6;line-height:20px;right:1013.6px;">0.00</div>
<div class="t s" style="top:804px;font-size:11.5px;color:#1f6fd6;line-height:20px;right:933px;">0.00</div>
<div class="t s" style="top:804px;font-size:11.5px;color:#1f6fd6;line-height:20px;right:858.6px;">0.00</div>
<div class="t s" style="top:804px;font-size:11.5px;color:#1f6fd6;line-height:20px;right:784.2px;">0.00</div>
<div class="t s" style="top:804px;font-size:11.5px;color:#1f6fd6;line-height:20px;right:689.4px;">0.00</div>
<div class="t s" style="top:804px;font-size:11.5px;color:#1f6fd6;line-height:20px;right:602.4px;">0.00</div>
<div class="t s" style="top:804px;font-size:11.5px;color:#1f6fd6;line-height:20px;right:515.4px;">0.00</div>
<div class="t s" style="top:804px;font-size:11.5px;color:#1f6fd6;line-height:20px;right:428.4px;">0.00</div>
<div class="t s" style="top:804px;font-size:11.5px;color:#1f6fd6;line-height:20px;right:341.4000000000001px;">0.00</div>
<div class="t s" style="top:804px;font-size:11.5px;color:#1f6fd6;line-height:20px;right:254.4000000000001px;">0.00</div>
<div class="t s" style="top:804px;font-size:11.5px;color:#1f6fd6;line-height:20px;right:167.4000000000001px;">0.00</div>
<div class="t s" style="top:804px;font-size:11.5px;color:#1f6fd6;line-height:20px;right:80.40000000000009px;">0.00</div>
<div class="t s" style="top:804px;font-size:11.5px;color:#1f6fd6;line-height:20px;right:-6.599999999999909px;">0.00</div>
<div class="t s" style="top:824px;font-size:11.5px;color:#181818;line-height:20px;letter-spacing:-0.344px;right:1124px;">660 Rent - US</div>
<svg style="position:absolute;left:315px;top:831px" width="6" height="9" viewBox="0 0 6 9"><polyline points="0.7,0.6 4.7,4.5 0.7,8.4" fill="none" stroke="#5e5e5e" stroke-width="1.15"/></svg>
<svg style="position:absolute;left:329.5px;top:831px" width="9" height="9" viewBox="0 0 9 9"><rect x="0" y="3.9" width="9" height="1.2" fill="#8a8a8a"/><rect x="3.9" y="0" width="1.2" height="9" fill="#8a8a8a"/></svg>
<div class="t s" style="top:824px;font-size:11.5px;color:#1f6fd6;line-height:20px;right:1013.6px;">12,565.48</div>
<div class="t s" style="top:824px;font-size:11.5px;color:#1f6fd6;line-height:20px;right:933px;">13,140.25</div>
<div class="t s" style="top:824px;font-size:11.5px;color:#1f6fd6;line-height:20px;right:858.6px;">11,290.48</div>
<div class="t s" style="top:824px;font-size:11.5px;color:#1f6fd6;line-height:20px;right:784.2px;">1,849.77</div>
<div class="t s" style="top:824px;font-size:11.5px;color:#1f6fd6;line-height:20px;right:689.4px;">13,140.25</div>
<div class="t s" style="top:824px;font-size:11.5px;color:#1f6fd6;line-height:20px;right:602.4px;">13,140.25</div>
<div class="t s" style="top:824px;font-size:11.5px;color:#1f6fd6;line-height:20px;right:515.4px;">13,140.25</div>
<div class="t s" style="top:824px;font-size:11.5px;color:#1f6fd6;line-height:20px;right:428.4px;">13,140.25</div>
<div class="t s" style="top:824px;font-size:11.5px;color:#1f6fd6;line-height:20px;right:341.4000000000001px;">13,140.25</div>
<div class="t s" style="top:824px;font-size:11.5px;color:#1f6fd6;line-height:20px;right:254.4000000000001px;">13,140.25</div>
<div class="t s" style="top:824px;font-size:11.5px;color:#1f6fd6;line-height:20px;right:167.4000000000001px;">13,140.25</div>
<div class="t s" style="top:824px;font-size:11.5px;color:#1f6fd6;line-height:20px;right:80.40000000000009px;">13,140.25</div>
<div class="t s" style="top:824px;font-size:11.5px;color:#1f6fd6;line-height:20px;right:-6.599999999999909px;">13,140.25</div>
</div>
<div style="position:absolute;left:170.5px;top:98px;width:189px;height:72px;background:#e5e5e8;border-radius:7px;border:1px solid #c8c8cc;box-sizing:border-box;box-shadow:0 3px 10px rgba(0,0,0,0.22)"></div>
<div style="position:absolute;left:176px;top:104px;width:178px;height:20px;background:#5b9bf8;border-radius:4px"></div>
<svg style="position:absolute;left:180px;top:109px" width="11" height="11" viewBox="0 0 11 11"><polyline points="1,5.8 4,9.4 10,1" fill="none" stroke="#fff" stroke-width="1.7"/></svg>
<div class="t s" style="top:104px;font-size:12px;color:#fff;line-height:20px;letter-spacing:-0.16px;left:196px;">All Organizations</div>
<div class="t s" style="top:124px;font-size:12px;color:#2b2b2b;line-height:20px;letter-spacing:-0.17px;left:196px;">India Organization</div>
<div class="t s" style="top:144px;font-size:12px;color:#2b2b2b;line-height:20px;letter-spacing:-0.22px;left:196px;">US Organization</div>
<div style="position:absolute;left:1388px;top:0px;width:40px;height:840px;background:linear-gradient(90deg,rgba(0,0,0,0) 0%,rgba(0,0,0,0.02) 45%,rgba(0,0,0,0.05) 75%,rgba(0,0,0,0.12) 100%)"></div>
<div style="position:absolute;left:12px;top:838px;width:1407px;height:1px;background:#d6d3d2"></div>
<div style="position:absolute;left:0px;top:839px;width:1428px;height:1px;background:#b3c3dd"></div>
</body></html>
